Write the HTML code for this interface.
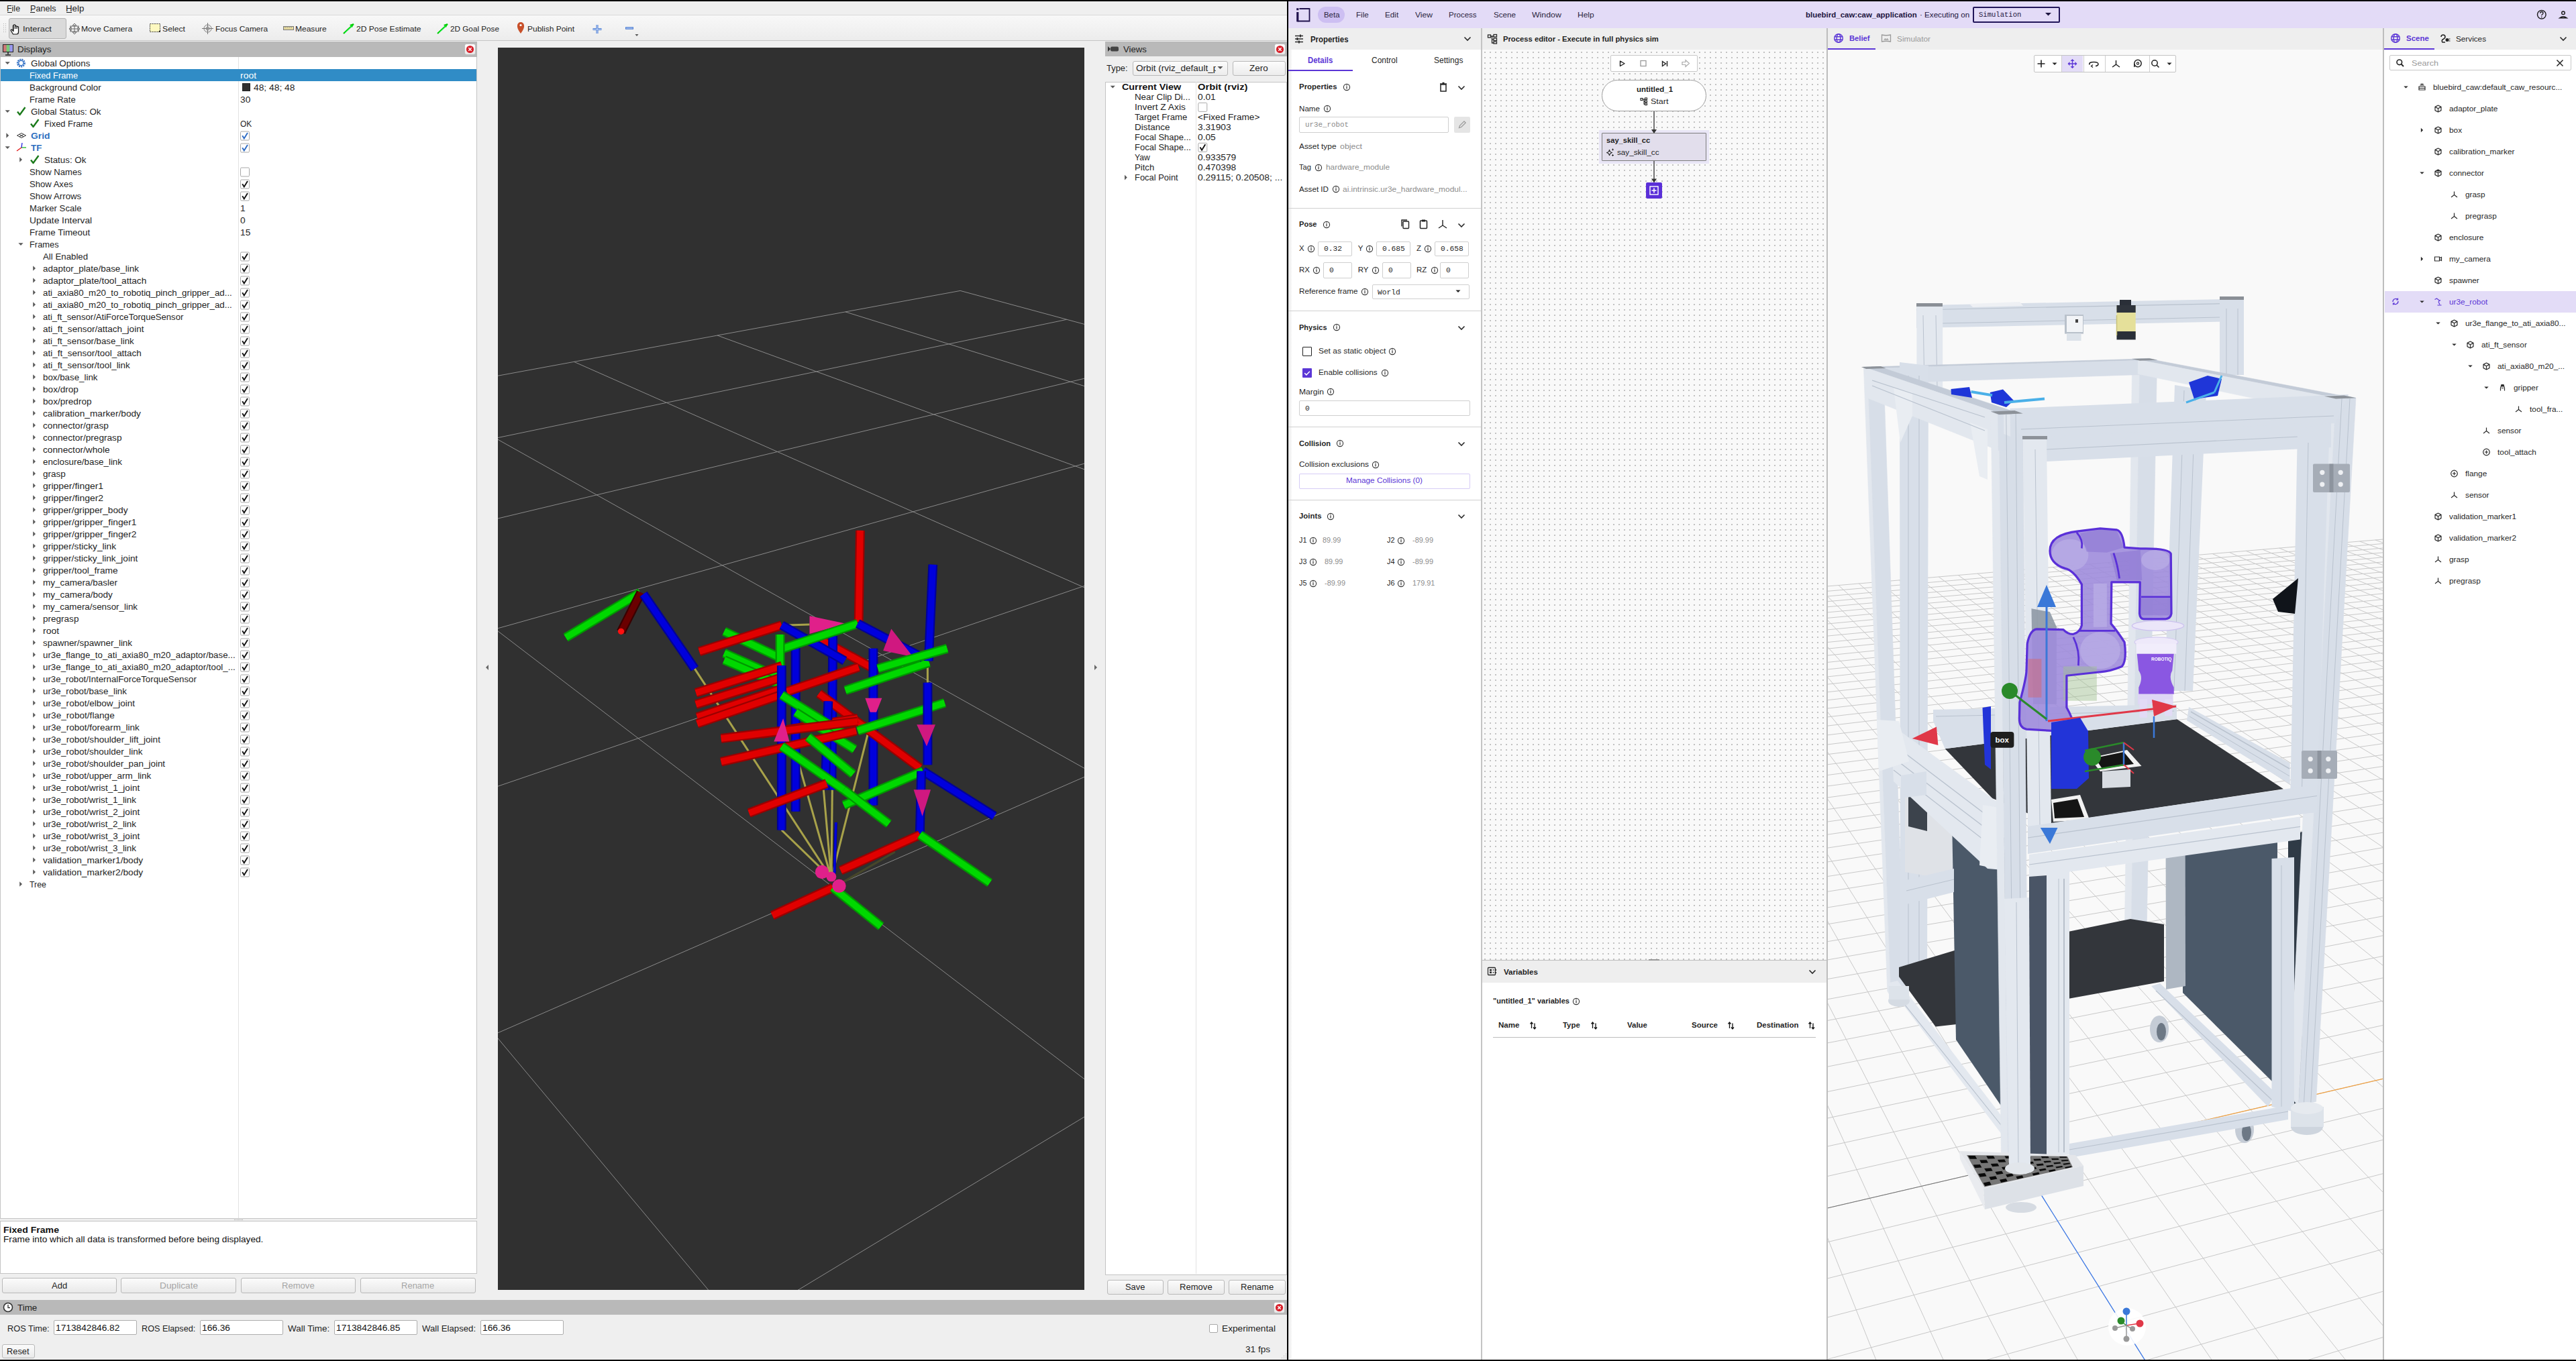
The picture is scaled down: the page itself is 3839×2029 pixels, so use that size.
<!DOCTYPE html><html><head><meta charset="utf-8"><style>
*{margin:0;padding:0;box-sizing:border-box}
html,body{width:3839px;height:2029px;overflow:hidden;background:#000}
body{position:relative;font-family:"Liberation Sans",sans-serif;color:#000}
.a{position:absolute}
.t{position:absolute;white-space:nowrap;line-height:1}
svg{position:absolute;overflow:visible}
</style></head><body><div class="a" style="left:0.0px;top:2.0px;width:1918.0px;height:2025.0px;background:#efefef"></div><div class="t" style="left:10.2px;top:7.3px;font-size:12.48px;color:#1e1e1e;font-weight:normal;transform:scaleX(0.9986);transform-origin:0 0;">File</div><div class="t" style="left:44.7px;top:7.3px;font-size:12.48px;color:#1e1e1e;font-weight:normal;transform:scaleX(1.0122);transform-origin:0 0;">Panels</div><div class="t" style="left:98.2px;top:7.3px;font-size:12.48px;color:#1e1e1e;font-weight:normal;transform:scaleX(1.0660);transform-origin:0 0;">Help</div><div class="a" style="left:10.5px;top:18.0px;width:7.0px;height:1.0px;background:#1e1e1e"></div><div class="a" style="left:44.5px;top:18.0px;width:7.0px;height:1.0px;background:#1e1e1e"></div><div class="a" style="left:98.5px;top:18.0px;width:8.0px;height:1.0px;background:#1e1e1e"></div><div class="a" style="left:0.0px;top:22.0px;width:1918.0px;height:1.0px;background:#d9d9d9"></div><div class="a" style="left:0.0px;top:23.0px;width:1918.0px;height:37.0px;background:linear-gradient(#f8f8f8,#ececec)"></div><div class="a" style="left:0.0px;top:60.0px;width:1918.0px;height:1.0px;background:#c6c6c6"></div><div class="a" style="left:5.0px;top:35.0px;width:1.0px;height:1.0px;background:#b0b0b0"></div><div class="a" style="left:8.0px;top:35.0px;width:1.0px;height:1.0px;background:#b0b0b0"></div><div class="a" style="left:5.0px;top:38.0px;width:1.0px;height:1.0px;background:#b0b0b0"></div><div class="a" style="left:8.0px;top:38.0px;width:1.0px;height:1.0px;background:#b0b0b0"></div><div class="a" style="left:5.0px;top:41.0px;width:1.0px;height:1.0px;background:#b0b0b0"></div><div class="a" style="left:8.0px;top:41.0px;width:1.0px;height:1.0px;background:#b0b0b0"></div><div class="a" style="left:5.0px;top:44.0px;width:1.0px;height:1.0px;background:#b0b0b0"></div><div class="a" style="left:8.0px;top:44.0px;width:1.0px;height:1.0px;background:#b0b0b0"></div><div class="a" style="left:5.0px;top:47.0px;width:1.0px;height:1.0px;background:#b0b0b0"></div><div class="a" style="left:8.0px;top:47.0px;width:1.0px;height:1.0px;background:#b0b0b0"></div><div class="a" style="left:13.0px;top:27.0px;width:86.0px;height:31.0px;background:#dadada;border:1px solid #b2b2b2;border-radius:3px"></div><div class="t" style="left:34.1px;top:38.3px;font-size:11.44px;color:#1e1e1e;font-weight:normal;transform:scaleX(1.1251);transform-origin:0 0;">Interact</div><div class="t" style="left:121.1px;top:38.3px;font-size:11.44px;color:#1e1e1e;font-weight:normal;transform:scaleX(1.0603);transform-origin:0 0;">Move Camera</div><div class="t" style="left:241.5px;top:38.3px;font-size:11.44px;color:#1e1e1e;font-weight:normal;transform:scaleX(1.0674);transform-origin:0 0;">Select</div><div class="t" style="left:320.5px;top:38.3px;font-size:11.44px;color:#1e1e1e;font-weight:normal;transform:scaleX(1.0409);transform-origin:0 0;">Focus Camera</div><div class="t" style="left:440.0px;top:38.3px;font-size:11.44px;color:#1e1e1e;font-weight:normal;transform:scaleX(1.0504);transform-origin:0 0;">Measure</div><div class="t" style="left:530.5px;top:38.3px;font-size:11.44px;color:#1e1e1e;font-weight:normal;transform:scaleX(1.0542);transform-origin:0 0;">2D Pose Estimate</div><div class="t" style="left:670.5px;top:38.3px;font-size:11.44px;color:#1e1e1e;font-weight:normal;transform:scaleX(1.0248);transform-origin:0 0;">2D Goal Pose</div><div class="t" style="left:786.4px;top:38.3px;font-size:11.44px;color:#1e1e1e;font-weight:normal;transform:scaleX(1.0486);transform-origin:0 0;">Publish Point</div><svg style="left:0px;top:0px;" width="1000" height="62" viewBox="0 0 1000 62"><path d="M20 37 v10 M20 39 q0-3 2.5-2 v6 M22.5 40 q0-2 2.5-1 v4 M25 41 q0-2 2.5-1 v4 l0 4 q0 3 -3 3 h-5 l-3 -5 q-1-2 1-2 l2 2 v-8" fill="#fff" stroke="#111" stroke-width="1.2"/><g stroke="#666" fill="none" stroke-width="1"><path d="M111 35 l-3 3 h6 z M111 51 l-3-3 h6 z M103 43 l3-3 v6 z M119 43 l-3-3 v6 z"/><path d="M111 38 v10 M106 43 h10"/><rect x="105" y="39" width="12" height="8"/></g><rect x="223.5" y="35.5" width="15" height="12" fill="#fdf8c0" stroke="#222" stroke-dasharray="1.5,1.2"/><path d="M236 47.5 l3-3 v3z" fill="#111"/><g stroke="#777" fill="none"><circle cx="309.5" cy="42.5" r="5.5"/><circle cx="309.5" cy="42.5" r="2.5"/><path d="M309.5 34 v17 M301 42.5 h17"/></g><rect x="422.5" y="39.5" width="15" height="5" fill="#e8dca0" stroke="#777"/><path d="M425 40v2 M428 40v2 M431 40v2 M434 40v2" stroke="#777" stroke-width=".7"/><path d="M512 50 L527 36" stroke="#0c0" stroke-width="2.2"/><path d="M527 35 l-6 2 l4 4z" fill="#0c0"/><path d="M514 49 L525 38" stroke="#00ff44" stroke-width="1"/><path d="M652 50 L667 36" stroke="#0c0" stroke-width="2.2"/><path d="M667 35 l-6 2 l4 4z" fill="#0c0"/><path d="M654 49 L665 38" stroke="#00ff44" stroke-width="1"/><path d="M776 50 q-6-8 -5-12 a5 5 0 0 1 10 0 q1 4 -5 12z" fill="#c8502a"/><circle cx="776" cy="37.5" r="1.6" fill="#fff"/><path d="M890 37 v13 M883.5 43.5 h13" stroke="#4a7bd0" stroke-width="3"/><path d="M890 37 v13 M883.5 43.5 h13" stroke="#cfe0ff" stroke-width="1"/><path d="M932 42 h12" stroke="#4a7bd0" stroke-width="3.5"/><path d="M933 42 h10" stroke="#cfe0ff" stroke-width="1"/><path d="M946.5 51 h5 l-2.5 3z" fill="#555"/></svg><div class="a" style="left:0.0px;top:62.0px;width:711.0px;height:23.0px;background:#b9b9b9"></div><div class="t" style="left:26.0px;top:67.9px;font-size:12.48px;color:#1e1e1e;font-weight:normal;transform:scaleX(1.0705);transform-origin:0 0;">Displays</div><svg style="left:0px;top:62px;" width="24" height="24" viewBox="0 0 24 24"><rect x="4.5" y="4.5" width="15" height="11" fill="#888" stroke="#222"/><rect x="5" y="5" width="4.7" height="10" fill="#c77"/><rect x="9.7" y="5" width="4.7" height="10" fill="#7c7"/><rect x="14.4" y="5" width="4.6" height="10" fill="#99e"/><path d="M12 16 v3 M8 20 h8" stroke="#222" stroke-width="1.5"/></svg><div class="a" style="left:692.0px;top:65.0px;width:17.0px;height:17.0px;background:linear-gradient(#fff,#e6e6e6);border:1px solid #bdbdbd;border-radius:3px"></div><svg style="left:692px;top:65px;" width="17" height="17" viewBox="0 0 17 17"><circle cx="8.5" cy="8.5" r="5.6" fill="#d8202a"/><path d="M6.3 6.3 l4.4 4.4 M10.7 6.3 l-4.4 4.4" stroke="#fff" stroke-width="1.4"/></svg><div class="a" style="left:0.0px;top:85.0px;width:711.0px;height:1732.0px;background:#fff;border:1px solid #c4c4c4;border-top:none"></div><div class="a" style="left:355.0px;top:85.0px;width:1.0px;height:1731.0px;background:#e2e2e2"></div><div class="a" style="left:1.0px;top:103.0px;width:709.0px;height:18.0px;background:#308cc6"></div><div class="t" style="left:46.2px;top:88.7px;font-size:12.48px;color:#1e1e1e;font-weight:normal;transform:scaleX(1.0708);transform-origin:0 0;">Global Options</div><div class="t" style="left:44.2px;top:106.7px;font-size:12.48px;color:#fff;font-weight:normal;transform:scaleX(1.0323);transform-origin:0 0;">Fixed Frame</div><div class="t" style="left:358.0px;top:106.7px;font-size:12.48px;color:#fff;font-weight:normal;transform:scaleX(1.1188);transform-origin:0 0;">root</div><div class="t" style="left:44.2px;top:124.7px;font-size:12.48px;color:#1e1e1e;font-weight:normal;transform:scaleX(1.0686);transform-origin:0 0;">Background Color</div><div class="t" style="left:378.0px;top:124.7px;font-size:12.48px;color:#1e1e1e;font-weight:normal;transform:scaleX(1.1083);transform-origin:0 0;">48; 48; 48</div><div class="t" style="left:44.2px;top:142.7px;font-size:12.48px;color:#1e1e1e;font-weight:normal;transform:scaleX(1.0430);transform-origin:0 0;">Frame Rate</div><div class="t" style="left:358.0px;top:142.7px;font-size:12.48px;color:#1e1e1e;font-weight:normal;transform:scaleX(1.1001);transform-origin:0 0;">30</div><div class="t" style="left:46.2px;top:160.7px;font-size:12.48px;color:#1e1e1e;font-weight:normal;transform:scaleX(1.0693);transform-origin:0 0;">Global Status: Ok</div><div class="t" style="left:66.0px;top:178.7px;font-size:12.48px;color:#1e1e1e;font-weight:normal;transform:scaleX(1.0323);transform-origin:0 0;">Fixed Frame</div><div class="t" style="left:358.0px;top:178.7px;font-size:12.48px;color:#1e1e1e;font-weight:normal;transform:scaleX(0.9603);transform-origin:0 0;">OK</div><div class="t" style="left:46.2px;top:196.7px;font-size:12.48px;color:#2d6fc0;font-weight:bold;transform:scaleX(1.1098);transform-origin:0 0;">Grid</div><div class="t" style="left:46.2px;top:214.7px;font-size:12.48px;color:#2d6fc0;font-weight:bold;transform:scaleX(1.0747);transform-origin:0 0;">TF</div><div class="t" style="left:66.0px;top:232.7px;font-size:12.48px;color:#1e1e1e;font-weight:normal;transform:scaleX(1.0726);transform-origin:0 0;">Status: Ok</div><div class="t" style="left:44.2px;top:250.7px;font-size:12.48px;color:#1e1e1e;font-weight:normal;transform:scaleX(1.0490);transform-origin:0 0;">Show Names</div><div class="t" style="left:44.2px;top:268.7px;font-size:12.48px;color:#1e1e1e;font-weight:normal;transform:scaleX(1.0491);transform-origin:0 0;">Show Axes</div><div class="t" style="left:44.2px;top:286.7px;font-size:12.48px;color:#1e1e1e;font-weight:normal;transform:scaleX(1.0601);transform-origin:0 0;">Show Arrows</div><div class="t" style="left:44.2px;top:304.7px;font-size:12.48px;color:#1e1e1e;font-weight:normal;transform:scaleX(1.0554);transform-origin:0 0;">Marker Scale</div><div class="t" style="left:358.0px;top:304.7px;font-size:12.48px;color:#1e1e1e;font-weight:normal;transform:scaleX(1.1001);transform-origin:0 0;">1</div><div class="t" style="left:44.2px;top:322.7px;font-size:12.48px;color:#1e1e1e;font-weight:normal;transform:scaleX(1.1016);transform-origin:0 0;">Update Interval</div><div class="t" style="left:358.0px;top:322.7px;font-size:12.48px;color:#1e1e1e;font-weight:normal;transform:scaleX(1.1001);transform-origin:0 0;">0</div><div class="t" style="left:44.2px;top:340.7px;font-size:12.48px;color:#1e1e1e;font-weight:normal;transform:scaleX(1.0752);transform-origin:0 0;">Frame Timeout</div><div class="t" style="left:358.0px;top:340.7px;font-size:12.48px;color:#1e1e1e;font-weight:normal;transform:scaleX(1.1001);transform-origin:0 0;">15</div><div class="t" style="left:44.2px;top:358.7px;font-size:12.48px;color:#1e1e1e;font-weight:normal;transform:scaleX(1.0318);transform-origin:0 0;">Frames</div><div class="t" style="left:64.0px;top:376.7px;font-size:12.48px;color:#1e1e1e;font-weight:normal;transform:scaleX(1.0641);transform-origin:0 0;">All Enabled</div><div class="t" style="left:64.0px;top:394.7px;font-size:12.48px;color:#1e1e1e;font-weight:normal;transform:scaleX(1.0805);transform-origin:0 0;">adaptor_plate/base_link</div><div class="t" style="left:64.0px;top:412.7px;font-size:12.48px;color:#1e1e1e;font-weight:normal;transform:scaleX(1.0963);transform-origin:0 0;">adaptor_plate/tool_attach</div><div class="t" style="left:64.0px;top:430.7px;font-size:12.48px;color:#1e1e1e;font-weight:normal;transform:scaleX(1.0670);transform-origin:0 0;">ati_axia80_m20_to_robotiq_pinch_gripper_ad...</div><div class="t" style="left:64.0px;top:448.7px;font-size:12.48px;color:#1e1e1e;font-weight:normal;transform:scaleX(1.0670);transform-origin:0 0;">ati_axia80_m20_to_robotiq_pinch_gripper_ad...</div><div class="t" style="left:64.0px;top:466.7px;font-size:12.48px;color:#1e1e1e;font-weight:normal;transform:scaleX(1.0525);transform-origin:0 0;">ati_ft_sensor/AtiForceTorqueSensor</div><div class="t" style="left:64.0px;top:484.7px;font-size:12.48px;color:#1e1e1e;font-weight:normal;transform:scaleX(1.0852);transform-origin:0 0;">ati_ft_sensor/attach_joint</div><div class="t" style="left:64.0px;top:502.7px;font-size:12.48px;color:#1e1e1e;font-weight:normal;transform:scaleX(1.0635);transform-origin:0 0;">ati_ft_sensor/base_link</div><div class="t" style="left:64.0px;top:520.7px;font-size:12.48px;color:#1e1e1e;font-weight:normal;transform:scaleX(1.0808);transform-origin:0 0;">ati_ft_sensor/tool_attach</div><div class="t" style="left:64.0px;top:538.7px;font-size:12.48px;color:#1e1e1e;font-weight:normal;transform:scaleX(1.0759);transform-origin:0 0;">ati_ft_sensor/tool_link</div><div class="t" style="left:64.0px;top:556.7px;font-size:12.48px;color:#1e1e1e;font-weight:normal;transform:scaleX(1.0688);transform-origin:0 0;">box/base_link</div><div class="t" style="left:64.0px;top:574.7px;font-size:12.48px;color:#1e1e1e;font-weight:normal;transform:scaleX(1.0910);transform-origin:0 0;">box/drop</div><div class="t" style="left:64.0px;top:592.7px;font-size:12.48px;color:#1e1e1e;font-weight:normal;transform:scaleX(1.0909);transform-origin:0 0;">box/predrop</div><div class="t" style="left:64.0px;top:610.7px;font-size:12.48px;color:#1e1e1e;font-weight:normal;transform:scaleX(1.0967);transform-origin:0 0;">calibration_marker/body</div><div class="t" style="left:64.0px;top:628.7px;font-size:12.48px;color:#1e1e1e;font-weight:normal;transform:scaleX(1.0944);transform-origin:0 0;">connector/grasp</div><div class="t" style="left:64.0px;top:646.7px;font-size:12.48px;color:#1e1e1e;font-weight:normal;transform:scaleX(1.0937);transform-origin:0 0;">connector/pregrasp</div><div class="t" style="left:64.0px;top:664.7px;font-size:12.48px;color:#1e1e1e;font-weight:normal;transform:scaleX(1.0964);transform-origin:0 0;">connector/whole</div><div class="t" style="left:64.0px;top:682.7px;font-size:12.48px;color:#1e1e1e;font-weight:normal;transform:scaleX(1.0702);transform-origin:0 0;">enclosure/base_link</div><div class="t" style="left:64.0px;top:700.7px;font-size:12.48px;color:#1e1e1e;font-weight:normal;transform:scaleX(1.0820);transform-origin:0 0;">grasp</div><div class="t" style="left:64.0px;top:718.7px;font-size:12.48px;color:#1e1e1e;font-weight:normal;transform:scaleX(1.1211);transform-origin:0 0;">gripper/finger1</div><div class="t" style="left:64.0px;top:736.7px;font-size:12.48px;color:#1e1e1e;font-weight:normal;transform:scaleX(1.1211);transform-origin:0 0;">gripper/finger2</div><div class="t" style="left:64.0px;top:754.7px;font-size:12.48px;color:#1e1e1e;font-weight:normal;transform:scaleX(1.0994);transform-origin:0 0;">gripper/gripper_body</div><div class="t" style="left:64.0px;top:772.7px;font-size:12.48px;color:#1e1e1e;font-weight:normal;transform:scaleX(1.1061);transform-origin:0 0;">gripper/gripper_finger1</div><div class="t" style="left:64.0px;top:790.7px;font-size:12.48px;color:#1e1e1e;font-weight:normal;transform:scaleX(1.1061);transform-origin:0 0;">gripper/gripper_finger2</div><div class="t" style="left:64.0px;top:808.7px;font-size:12.48px;color:#1e1e1e;font-weight:normal;transform:scaleX(1.1012);transform-origin:0 0;">gripper/sticky_link</div><div class="t" style="left:64.0px;top:826.7px;font-size:12.48px;color:#1e1e1e;font-weight:normal;transform:scaleX(1.0971);transform-origin:0 0;">gripper/sticky_link_joint</div><div class="t" style="left:64.0px;top:844.7px;font-size:12.48px;color:#1e1e1e;font-weight:normal;transform:scaleX(1.1039);transform-origin:0 0;">gripper/tool_frame</div><div class="t" style="left:64.0px;top:862.7px;font-size:12.48px;color:#1e1e1e;font-weight:normal;transform:scaleX(1.0816);transform-origin:0 0;">my_camera/basler</div><div class="t" style="left:64.0px;top:880.7px;font-size:12.48px;color:#1e1e1e;font-weight:normal;transform:scaleX(1.0848);transform-origin:0 0;">my_camera/body</div><div class="t" style="left:64.0px;top:898.7px;font-size:12.48px;color:#1e1e1e;font-weight:normal;transform:scaleX(1.0710);transform-origin:0 0;">my_camera/sensor_link</div><div class="t" style="left:64.0px;top:916.7px;font-size:12.48px;color:#1e1e1e;font-weight:normal;transform:scaleX(1.0852);transform-origin:0 0;">pregrasp</div><div class="t" style="left:64.0px;top:934.7px;font-size:12.48px;color:#1e1e1e;font-weight:normal;transform:scaleX(1.1188);transform-origin:0 0;">root</div><div class="t" style="left:64.0px;top:952.7px;font-size:12.48px;color:#1e1e1e;font-weight:normal;transform:scaleX(1.0787);transform-origin:0 0;">spawner/spawner_link</div><div class="t" style="left:64.0px;top:970.7px;font-size:12.48px;color:#1e1e1e;font-weight:normal;transform:scaleX(1.0685);transform-origin:0 0;">ur3e_flange_to_ati_axia80_m20_adaptor/base...</div><div class="t" style="left:64.0px;top:988.7px;font-size:12.48px;color:#1e1e1e;font-weight:normal;transform:scaleX(1.0690);transform-origin:0 0;">ur3e_flange_to_ati_axia80_m20_adaptor/tool_...</div><div class="t" style="left:64.0px;top:1006.7px;font-size:12.48px;color:#1e1e1e;font-weight:normal;transform:scaleX(1.0653);transform-origin:0 0;">ur3e_robot/InternalForceTorqueSensor</div><div class="t" style="left:64.0px;top:1024.7px;font-size:12.48px;color:#1e1e1e;font-weight:normal;transform:scaleX(1.0734);transform-origin:0 0;">ur3e_robot/base_link</div><div class="t" style="left:64.0px;top:1042.7px;font-size:12.48px;color:#1e1e1e;font-weight:normal;transform:scaleX(1.0857);transform-origin:0 0;">ur3e_robot/elbow_joint</div><div class="t" style="left:64.0px;top:1060.7px;font-size:12.48px;color:#1e1e1e;font-weight:normal;transform:scaleX(1.0917);transform-origin:0 0;">ur3e_robot/flange</div><div class="t" style="left:64.0px;top:1078.7px;font-size:12.48px;color:#1e1e1e;font-weight:normal;transform:scaleX(1.0860);transform-origin:0 0;">ur3e_robot/forearm_link</div><div class="t" style="left:64.0px;top:1096.7px;font-size:12.48px;color:#1e1e1e;font-weight:normal;transform:scaleX(1.0876);transform-origin:0 0;">ur3e_robot/shoulder_lift_joint</div><div class="t" style="left:64.0px;top:1114.7px;font-size:12.48px;color:#1e1e1e;font-weight:normal;transform:scaleX(1.0816);transform-origin:0 0;">ur3e_robot/shoulder_link</div><div class="t" style="left:64.0px;top:1132.7px;font-size:12.48px;color:#1e1e1e;font-weight:normal;transform:scaleX(1.0765);transform-origin:0 0;">ur3e_robot/shoulder_pan_joint</div><div class="t" style="left:64.0px;top:1150.7px;font-size:12.48px;color:#1e1e1e;font-weight:normal;transform:scaleX(1.0773);transform-origin:0 0;">ur3e_robot/upper_arm_link</div><div class="t" style="left:64.0px;top:1168.7px;font-size:12.48px;color:#1e1e1e;font-weight:normal;transform:scaleX(1.0832);transform-origin:0 0;">ur3e_robot/wrist_1_joint</div><div class="t" style="left:64.0px;top:1186.7px;font-size:12.48px;color:#1e1e1e;font-weight:normal;transform:scaleX(1.0787);transform-origin:0 0;">ur3e_robot/wrist_1_link</div><div class="t" style="left:64.0px;top:1204.7px;font-size:12.48px;color:#1e1e1e;font-weight:normal;transform:scaleX(1.0832);transform-origin:0 0;">ur3e_robot/wrist_2_joint</div><div class="t" style="left:64.0px;top:1222.7px;font-size:12.48px;color:#1e1e1e;font-weight:normal;transform:scaleX(1.0787);transform-origin:0 0;">ur3e_robot/wrist_2_link</div><div class="t" style="left:64.0px;top:1240.7px;font-size:12.48px;color:#1e1e1e;font-weight:normal;transform:scaleX(1.0832);transform-origin:0 0;">ur3e_robot/wrist_3_joint</div><div class="t" style="left:64.0px;top:1258.7px;font-size:12.48px;color:#1e1e1e;font-weight:normal;transform:scaleX(1.0787);transform-origin:0 0;">ur3e_robot/wrist_3_link</div><div class="t" style="left:64.0px;top:1276.7px;font-size:12.48px;color:#1e1e1e;font-weight:normal;transform:scaleX(1.0978);transform-origin:0 0;">validation_marker1/body</div><div class="t" style="left:64.0px;top:1294.7px;font-size:12.48px;color:#1e1e1e;font-weight:normal;transform:scaleX(1.0978);transform-origin:0 0;">validation_marker2/body</div><div class="t" style="left:44.2px;top:1312.7px;font-size:12.48px;color:#1e1e1e;font-weight:normal;transform:scaleX(0.9923);transform-origin:0 0;">Tree</div><svg style="left:0px;top:0px;" width="720" height="1400" viewBox="0 0 720 1400"><path d="M7.6 92.2 h7.2 l-3.6 3.8z" fill="#5a5a5a"/><g transform="translate(31.4 94)"><circle r="5.2" fill="none" stroke="#3d78c8" stroke-width="2.6" stroke-dasharray="2 1.1"/><circle r="3.6" fill="none" stroke="#3d78c8" stroke-width="1.4"/></g><rect x="361.5" y="124.5" width="11" height="11" fill="#303030" stroke="#222"/><path d="M7.6 164.2 h7.2 l-3.6 3.8z" fill="#5a5a5a"/><path d="M26 166.5 l3.5 4.5 l8-11" stroke="#1b7a1b" stroke-width="2.4" fill="none" stroke-linejoin="round"/><path d="M46 184.5 l3.5 4.5 l8-11" stroke="#1b7a1b" stroke-width="2.4" fill="none" stroke-linejoin="round"/><path d="M9.399999999999999 198.2 v7.6 l3.8-3.8z" fill="#5a5a5a"/><g stroke="#333" fill="none" stroke-width="1"><path d="M25.5 202 l6.5-3.5 l6.5 3.5 l-6.5 3.5z M28.5 200.3 l6.5 3.5 M35.5 200.3 l-6.5 3.5"/></g><rect x="358.5" y="196" width="13" height="13" fill="#fff" stroke="#a8a8a8" rx="1.5"/><path d="M361.2 202.3 l2.6 4.2 l5.2-8.6" stroke="#2c6ac4" stroke-width="1.9" fill="none"/><path d="M7.6 218.2 h7.2 l-3.6 3.8z" fill="#5a5a5a"/><g stroke-width="1.2"><path d="M32 220 l-7 5" stroke="#e01010"/><path d="M32 220 l7 0" stroke="#10b010"/><path d="M32 220 l1-7" stroke="#1010e0"/></g><rect x="358.5" y="214" width="13" height="13" fill="#fff" stroke="#a8a8a8" rx="1.5"/><path d="M361.2 220.3 l2.6 4.2 l5.2-8.6" stroke="#2c6ac4" stroke-width="1.9" fill="none"/><path d="M29.2 234.2 v7.6 l3.8-3.8z" fill="#5a5a5a"/><path d="M46 238.5 l3.5 4.5 l8-11" stroke="#1b7a1b" stroke-width="2.4" fill="none" stroke-linejoin="round"/><rect x="358.5" y="250" width="13" height="13" fill="#fff" stroke="#a8a8a8" rx="1.5"/><rect x="358.5" y="268" width="13" height="13" fill="#fff" stroke="#a8a8a8" rx="1.5"/><path d="M361.2 274.3 l2.6 4.2 l5.2-8.6" stroke="#111" stroke-width="1.9" fill="none"/><rect x="358.5" y="286" width="13" height="13" fill="#fff" stroke="#a8a8a8" rx="1.5"/><path d="M361.2 292.3 l2.6 4.2 l5.2-8.6" stroke="#111" stroke-width="1.9" fill="none"/><path d="M27.4 362.2 h7.2 l-3.6 3.8z" fill="#5a5a5a"/><rect x="358.5" y="376" width="13" height="13" fill="#fff" stroke="#a8a8a8" rx="1.5"/><path d="M361.2 382.3 l2.6 4.2 l5.2-8.6" stroke="#111" stroke-width="1.9" fill="none"/><path d="M49.2 396.2 v7.6 l3.8-3.8z" fill="#5a5a5a"/><rect x="358.5" y="394" width="13" height="13" fill="#fff" stroke="#a8a8a8" rx="1.5"/><path d="M361.2 400.3 l2.6 4.2 l5.2-8.6" stroke="#111" stroke-width="1.9" fill="none"/><path d="M49.2 414.2 v7.6 l3.8-3.8z" fill="#5a5a5a"/><rect x="358.5" y="412" width="13" height="13" fill="#fff" stroke="#a8a8a8" rx="1.5"/><path d="M361.2 418.3 l2.6 4.2 l5.2-8.6" stroke="#111" stroke-width="1.9" fill="none"/><path d="M49.2 432.2 v7.6 l3.8-3.8z" fill="#5a5a5a"/><rect x="358.5" y="430" width="13" height="13" fill="#fff" stroke="#a8a8a8" rx="1.5"/><path d="M361.2 436.3 l2.6 4.2 l5.2-8.6" stroke="#111" stroke-width="1.9" fill="none"/><path d="M49.2 450.2 v7.6 l3.8-3.8z" fill="#5a5a5a"/><rect x="358.5" y="448" width="13" height="13" fill="#fff" stroke="#a8a8a8" rx="1.5"/><path d="M361.2 454.3 l2.6 4.2 l5.2-8.6" stroke="#111" stroke-width="1.9" fill="none"/><path d="M49.2 468.2 v7.6 l3.8-3.8z" fill="#5a5a5a"/><rect x="358.5" y="466" width="13" height="13" fill="#fff" stroke="#a8a8a8" rx="1.5"/><path d="M361.2 472.3 l2.6 4.2 l5.2-8.6" stroke="#111" stroke-width="1.9" fill="none"/><path d="M49.2 486.2 v7.6 l3.8-3.8z" fill="#5a5a5a"/><rect x="358.5" y="484" width="13" height="13" fill="#fff" stroke="#a8a8a8" rx="1.5"/><path d="M361.2 490.3 l2.6 4.2 l5.2-8.6" stroke="#111" stroke-width="1.9" fill="none"/><path d="M49.2 504.2 v7.6 l3.8-3.8z" fill="#5a5a5a"/><rect x="358.5" y="502" width="13" height="13" fill="#fff" stroke="#a8a8a8" rx="1.5"/><path d="M361.2 508.3 l2.6 4.2 l5.2-8.6" stroke="#111" stroke-width="1.9" fill="none"/><path d="M49.2 522.2 v7.6 l3.8-3.8z" fill="#5a5a5a"/><rect x="358.5" y="520" width="13" height="13" fill="#fff" stroke="#a8a8a8" rx="1.5"/><path d="M361.2 526.3 l2.6 4.2 l5.2-8.6" stroke="#111" stroke-width="1.9" fill="none"/><path d="M49.2 540.2 v7.6 l3.8-3.8z" fill="#5a5a5a"/><rect x="358.5" y="538" width="13" height="13" fill="#fff" stroke="#a8a8a8" rx="1.5"/><path d="M361.2 544.3 l2.6 4.2 l5.2-8.6" stroke="#111" stroke-width="1.9" fill="none"/><path d="M49.2 558.2 v7.6 l3.8-3.8z" fill="#5a5a5a"/><rect x="358.5" y="556" width="13" height="13" fill="#fff" stroke="#a8a8a8" rx="1.5"/><path d="M361.2 562.3 l2.6 4.2 l5.2-8.6" stroke="#111" stroke-width="1.9" fill="none"/><path d="M49.2 576.2 v7.6 l3.8-3.8z" fill="#5a5a5a"/><rect x="358.5" y="574" width="13" height="13" fill="#fff" stroke="#a8a8a8" rx="1.5"/><path d="M361.2 580.3 l2.6 4.2 l5.2-8.6" stroke="#111" stroke-width="1.9" fill="none"/><path d="M49.2 594.2 v7.6 l3.8-3.8z" fill="#5a5a5a"/><rect x="358.5" y="592" width="13" height="13" fill="#fff" stroke="#a8a8a8" rx="1.5"/><path d="M361.2 598.3 l2.6 4.2 l5.2-8.6" stroke="#111" stroke-width="1.9" fill="none"/><path d="M49.2 612.2 v7.6 l3.8-3.8z" fill="#5a5a5a"/><rect x="358.5" y="610" width="13" height="13" fill="#fff" stroke="#a8a8a8" rx="1.5"/><path d="M361.2 616.3 l2.6 4.2 l5.2-8.6" stroke="#111" stroke-width="1.9" fill="none"/><path d="M49.2 630.2 v7.6 l3.8-3.8z" fill="#5a5a5a"/><rect x="358.5" y="628" width="13" height="13" fill="#fff" stroke="#a8a8a8" rx="1.5"/><path d="M361.2 634.3 l2.6 4.2 l5.2-8.6" stroke="#111" stroke-width="1.9" fill="none"/><path d="M49.2 648.2 v7.6 l3.8-3.8z" fill="#5a5a5a"/><rect x="358.5" y="646" width="13" height="13" fill="#fff" stroke="#a8a8a8" rx="1.5"/><path d="M361.2 652.3 l2.6 4.2 l5.2-8.6" stroke="#111" stroke-width="1.9" fill="none"/><path d="M49.2 666.2 v7.6 l3.8-3.8z" fill="#5a5a5a"/><rect x="358.5" y="664" width="13" height="13" fill="#fff" stroke="#a8a8a8" rx="1.5"/><path d="M361.2 670.3 l2.6 4.2 l5.2-8.6" stroke="#111" stroke-width="1.9" fill="none"/><path d="M49.2 684.2 v7.6 l3.8-3.8z" fill="#5a5a5a"/><rect x="358.5" y="682" width="13" height="13" fill="#fff" stroke="#a8a8a8" rx="1.5"/><path d="M361.2 688.3 l2.6 4.2 l5.2-8.6" stroke="#111" stroke-width="1.9" fill="none"/><path d="M49.2 702.2 v7.6 l3.8-3.8z" fill="#5a5a5a"/><rect x="358.5" y="700" width="13" height="13" fill="#fff" stroke="#a8a8a8" rx="1.5"/><path d="M361.2 706.3 l2.6 4.2 l5.2-8.6" stroke="#111" stroke-width="1.9" fill="none"/><path d="M49.2 720.2 v7.6 l3.8-3.8z" fill="#5a5a5a"/><rect x="358.5" y="718" width="13" height="13" fill="#fff" stroke="#a8a8a8" rx="1.5"/><path d="M361.2 724.3 l2.6 4.2 l5.2-8.6" stroke="#111" stroke-width="1.9" fill="none"/><path d="M49.2 738.2 v7.6 l3.8-3.8z" fill="#5a5a5a"/><rect x="358.5" y="736" width="13" height="13" fill="#fff" stroke="#a8a8a8" rx="1.5"/><path d="M361.2 742.3 l2.6 4.2 l5.2-8.6" stroke="#111" stroke-width="1.9" fill="none"/><path d="M49.2 756.2 v7.6 l3.8-3.8z" fill="#5a5a5a"/><rect x="358.5" y="754" width="13" height="13" fill="#fff" stroke="#a8a8a8" rx="1.5"/><path d="M361.2 760.3 l2.6 4.2 l5.2-8.6" stroke="#111" stroke-width="1.9" fill="none"/><path d="M49.2 774.2 v7.6 l3.8-3.8z" fill="#5a5a5a"/><rect x="358.5" y="772" width="13" height="13" fill="#fff" stroke="#a8a8a8" rx="1.5"/><path d="M361.2 778.3 l2.6 4.2 l5.2-8.6" stroke="#111" stroke-width="1.9" fill="none"/><path d="M49.2 792.2 v7.6 l3.8-3.8z" fill="#5a5a5a"/><rect x="358.5" y="790" width="13" height="13" fill="#fff" stroke="#a8a8a8" rx="1.5"/><path d="M361.2 796.3 l2.6 4.2 l5.2-8.6" stroke="#111" stroke-width="1.9" fill="none"/><path d="M49.2 810.2 v7.6 l3.8-3.8z" fill="#5a5a5a"/><rect x="358.5" y="808" width="13" height="13" fill="#fff" stroke="#a8a8a8" rx="1.5"/><path d="M361.2 814.3 l2.6 4.2 l5.2-8.6" stroke="#111" stroke-width="1.9" fill="none"/><path d="M49.2 828.2 v7.6 l3.8-3.8z" fill="#5a5a5a"/><rect x="358.5" y="826" width="13" height="13" fill="#fff" stroke="#a8a8a8" rx="1.5"/><path d="M361.2 832.3 l2.6 4.2 l5.2-8.6" stroke="#111" stroke-width="1.9" fill="none"/><path d="M49.2 846.2 v7.6 l3.8-3.8z" fill="#5a5a5a"/><rect x="358.5" y="844" width="13" height="13" fill="#fff" stroke="#a8a8a8" rx="1.5"/><path d="M361.2 850.3 l2.6 4.2 l5.2-8.6" stroke="#111" stroke-width="1.9" fill="none"/><path d="M49.2 864.2 v7.6 l3.8-3.8z" fill="#5a5a5a"/><rect x="358.5" y="862" width="13" height="13" fill="#fff" stroke="#a8a8a8" rx="1.5"/><path d="M361.2 868.3 l2.6 4.2 l5.2-8.6" stroke="#111" stroke-width="1.9" fill="none"/><path d="M49.2 882.2 v7.6 l3.8-3.8z" fill="#5a5a5a"/><rect x="358.5" y="880" width="13" height="13" fill="#fff" stroke="#a8a8a8" rx="1.5"/><path d="M361.2 886.3 l2.6 4.2 l5.2-8.6" stroke="#111" stroke-width="1.9" fill="none"/><path d="M49.2 900.2 v7.6 l3.8-3.8z" fill="#5a5a5a"/><rect x="358.5" y="898" width="13" height="13" fill="#fff" stroke="#a8a8a8" rx="1.5"/><path d="M361.2 904.3 l2.6 4.2 l5.2-8.6" stroke="#111" stroke-width="1.9" fill="none"/><path d="M49.2 918.2 v7.6 l3.8-3.8z" fill="#5a5a5a"/><rect x="358.5" y="916" width="13" height="13" fill="#fff" stroke="#a8a8a8" rx="1.5"/><path d="M361.2 922.3 l2.6 4.2 l5.2-8.6" stroke="#111" stroke-width="1.9" fill="none"/><path d="M49.2 936.2 v7.6 l3.8-3.8z" fill="#5a5a5a"/><rect x="358.5" y="934" width="13" height="13" fill="#fff" stroke="#a8a8a8" rx="1.5"/><path d="M361.2 940.3 l2.6 4.2 l5.2-8.6" stroke="#111" stroke-width="1.9" fill="none"/><path d="M49.2 954.2 v7.6 l3.8-3.8z" fill="#5a5a5a"/><rect x="358.5" y="952" width="13" height="13" fill="#fff" stroke="#a8a8a8" rx="1.5"/><path d="M361.2 958.3 l2.6 4.2 l5.2-8.6" stroke="#111" stroke-width="1.9" fill="none"/><path d="M49.2 972.2 v7.6 l3.8-3.8z" fill="#5a5a5a"/><rect x="358.5" y="970" width="13" height="13" fill="#fff" stroke="#a8a8a8" rx="1.5"/><path d="M361.2 976.3 l2.6 4.2 l5.2-8.6" stroke="#111" stroke-width="1.9" fill="none"/><path d="M49.2 990.2 v7.6 l3.8-3.8z" fill="#5a5a5a"/><rect x="358.5" y="988" width="13" height="13" fill="#fff" stroke="#a8a8a8" rx="1.5"/><path d="M361.2 994.3 l2.6 4.2 l5.2-8.6" stroke="#111" stroke-width="1.9" fill="none"/><path d="M49.2 1008.2 v7.6 l3.8-3.8z" fill="#5a5a5a"/><rect x="358.5" y="1006" width="13" height="13" fill="#fff" stroke="#a8a8a8" rx="1.5"/><path d="M361.2 1012.3 l2.6 4.2 l5.2-8.6" stroke="#111" stroke-width="1.9" fill="none"/><path d="M49.2 1026.2 v7.6 l3.8-3.8z" fill="#5a5a5a"/><rect x="358.5" y="1024" width="13" height="13" fill="#fff" stroke="#a8a8a8" rx="1.5"/><path d="M361.2 1030.3 l2.6 4.2 l5.2-8.6" stroke="#111" stroke-width="1.9" fill="none"/><path d="M49.2 1044.2 v7.6 l3.8-3.8z" fill="#5a5a5a"/><rect x="358.5" y="1042" width="13" height="13" fill="#fff" stroke="#a8a8a8" rx="1.5"/><path d="M361.2 1048.3 l2.6 4.2 l5.2-8.6" stroke="#111" stroke-width="1.9" fill="none"/><path d="M49.2 1062.2 v7.6 l3.8-3.8z" fill="#5a5a5a"/><rect x="358.5" y="1060" width="13" height="13" fill="#fff" stroke="#a8a8a8" rx="1.5"/><path d="M361.2 1066.3 l2.6 4.2 l5.2-8.6" stroke="#111" stroke-width="1.9" fill="none"/><path d="M49.2 1080.2 v7.6 l3.8-3.8z" fill="#5a5a5a"/><rect x="358.5" y="1078" width="13" height="13" fill="#fff" stroke="#a8a8a8" rx="1.5"/><path d="M361.2 1084.3 l2.6 4.2 l5.2-8.6" stroke="#111" stroke-width="1.9" fill="none"/><path d="M49.2 1098.2 v7.6 l3.8-3.8z" fill="#5a5a5a"/><rect x="358.5" y="1096" width="13" height="13" fill="#fff" stroke="#a8a8a8" rx="1.5"/><path d="M361.2 1102.3 l2.6 4.2 l5.2-8.6" stroke="#111" stroke-width="1.9" fill="none"/><path d="M49.2 1116.2 v7.6 l3.8-3.8z" fill="#5a5a5a"/><rect x="358.5" y="1114" width="13" height="13" fill="#fff" stroke="#a8a8a8" rx="1.5"/><path d="M361.2 1120.3 l2.6 4.2 l5.2-8.6" stroke="#111" stroke-width="1.9" fill="none"/><path d="M49.2 1134.2 v7.6 l3.8-3.8z" fill="#5a5a5a"/><rect x="358.5" y="1132" width="13" height="13" fill="#fff" stroke="#a8a8a8" rx="1.5"/><path d="M361.2 1138.3 l2.6 4.2 l5.2-8.6" stroke="#111" stroke-width="1.9" fill="none"/><path d="M49.2 1152.2 v7.6 l3.8-3.8z" fill="#5a5a5a"/><rect x="358.5" y="1150" width="13" height="13" fill="#fff" stroke="#a8a8a8" rx="1.5"/><path d="M361.2 1156.3 l2.6 4.2 l5.2-8.6" stroke="#111" stroke-width="1.9" fill="none"/><path d="M49.2 1170.2 v7.6 l3.8-3.8z" fill="#5a5a5a"/><rect x="358.5" y="1168" width="13" height="13" fill="#fff" stroke="#a8a8a8" rx="1.5"/><path d="M361.2 1174.3 l2.6 4.2 l5.2-8.6" stroke="#111" stroke-width="1.9" fill="none"/><path d="M49.2 1188.2 v7.6 l3.8-3.8z" fill="#5a5a5a"/><rect x="358.5" y="1186" width="13" height="13" fill="#fff" stroke="#a8a8a8" rx="1.5"/><path d="M361.2 1192.3 l2.6 4.2 l5.2-8.6" stroke="#111" stroke-width="1.9" fill="none"/><path d="M49.2 1206.2 v7.6 l3.8-3.8z" fill="#5a5a5a"/><rect x="358.5" y="1204" width="13" height="13" fill="#fff" stroke="#a8a8a8" rx="1.5"/><path d="M361.2 1210.3 l2.6 4.2 l5.2-8.6" stroke="#111" stroke-width="1.9" fill="none"/><path d="M49.2 1224.2 v7.6 l3.8-3.8z" fill="#5a5a5a"/><rect x="358.5" y="1222" width="13" height="13" fill="#fff" stroke="#a8a8a8" rx="1.5"/><path d="M361.2 1228.3 l2.6 4.2 l5.2-8.6" stroke="#111" stroke-width="1.9" fill="none"/><path d="M49.2 1242.2 v7.6 l3.8-3.8z" fill="#5a5a5a"/><rect x="358.5" y="1240" width="13" height="13" fill="#fff" stroke="#a8a8a8" rx="1.5"/><path d="M361.2 1246.3 l2.6 4.2 l5.2-8.6" stroke="#111" stroke-width="1.9" fill="none"/><path d="M49.2 1260.2 v7.6 l3.8-3.8z" fill="#5a5a5a"/><rect x="358.5" y="1258" width="13" height="13" fill="#fff" stroke="#a8a8a8" rx="1.5"/><path d="M361.2 1264.3 l2.6 4.2 l5.2-8.6" stroke="#111" stroke-width="1.9" fill="none"/><path d="M49.2 1278.2 v7.6 l3.8-3.8z" fill="#5a5a5a"/><rect x="358.5" y="1276" width="13" height="13" fill="#fff" stroke="#a8a8a8" rx="1.5"/><path d="M361.2 1282.3 l2.6 4.2 l5.2-8.6" stroke="#111" stroke-width="1.9" fill="none"/><path d="M49.2 1296.2 v7.6 l3.8-3.8z" fill="#5a5a5a"/><rect x="358.5" y="1294" width="13" height="13" fill="#fff" stroke="#a8a8a8" rx="1.5"/><path d="M361.2 1300.3 l2.6 4.2 l5.2-8.6" stroke="#111" stroke-width="1.9" fill="none"/><path d="M29.2 1314.2 v7.6 l3.8-3.8z" fill="#5a5a5a"/></svg><div class="a" style="left:349.0px;top:1818.0px;width:1.0px;height:1.0px;background:#999"></div><div class="a" style="left:351.0px;top:1818.0px;width:1.0px;height:1.0px;background:#999"></div><div class="a" style="left:353.0px;top:1818.0px;width:1.0px;height:1.0px;background:#999"></div><div class="a" style="left:355.0px;top:1818.0px;width:1.0px;height:1.0px;background:#999"></div><div class="a" style="left:357.0px;top:1818.0px;width:1.0px;height:1.0px;background:#999"></div><div class="a" style="left:359.0px;top:1818.0px;width:1.0px;height:1.0px;background:#999"></div><div class="a" style="left:361.0px;top:1818.0px;width:1.0px;height:1.0px;background:#999"></div><div class="a" style="left:0.0px;top:1820.0px;width:711.0px;height:79.0px;background:#fff;border:1px solid #c4c4c4"></div><div class="t" style="left:5.0px;top:1828.2px;font-size:12.48px;color:#111;font-weight:bold;transform:scaleX(1.1296);transform-origin:0 0;">Fixed Frame</div><div class="t" style="left:5.0px;top:1842.3px;font-size:12.48px;color:#111;font-weight:normal;transform:scaleX(1.0960);transform-origin:0 0;">Frame into which all data is transformed before being displayed.</div><div class="a" style="left:2.6px;top:1905.0px;width:171.0px;height:23.0px;background:linear-gradient(#fbfbfb,#e9e9e9);border:1px solid #b9b9b9;border-radius:3px"></div><div class="t" style="left:76.5px;top:1911.2px;font-size:12.48px;color:#1e1e1e;font-weight:normal;transform:scaleX(1.0464);transform-origin:0 0;">Add</div><div class="a" style="left:180.4px;top:1905.0px;width:172.0px;height:23.0px;background:linear-gradient(#fbfbfb,#e9e9e9);border:1px solid #b9b9b9;border-radius:3px"></div><div class="t" style="left:237.8px;top:1911.2px;font-size:12.48px;color:#a5a5a5;font-weight:normal;transform:scaleX(1.0989);transform-origin:0 0;">Duplicate</div><div class="a" style="left:359.3px;top:1905.0px;width:171.0px;height:23.0px;background:linear-gradient(#fbfbfb,#e9e9e9);border:1px solid #b9b9b9;border-radius:3px"></div><div class="t" style="left:420.4px;top:1911.2px;font-size:12.48px;color:#a5a5a5;font-weight:normal;transform:scaleX(1.0480);transform-origin:0 0;">Remove</div><div class="a" style="left:537.0px;top:1905.0px;width:172.0px;height:23.0px;background:linear-gradient(#fbfbfb,#e9e9e9);border:1px solid #b9b9b9;border-radius:3px"></div><div class="t" style="left:598.4px;top:1911.2px;font-size:12.48px;color:#a5a5a5;font-weight:normal;transform:scaleX(1.0434);transform-origin:0 0;">Rename</div><div class="a" style="left:0.0px;top:1938.0px;width:1918.0px;height:22.0px;background:#b9b9b9"></div><svg style="left:0px;top:1938px;" width="24" height="22" viewBox="0 0 24 22"><circle cx="12" cy="11" r="6.5" fill="#fff" stroke="#333" stroke-width="1.6"/><path d="M12 7 v4.5 h3" stroke="#333" stroke-width="1.3" fill="none"/></svg><div class="t" style="left:26.0px;top:1943.7px;font-size:12.48px;color:#1e1e1e;font-weight:normal;transform:scaleX(1.0769);transform-origin:0 0;">Time</div><div class="a" style="left:1898.0px;top:1941.0px;width:17.0px;height:17.0px;background:linear-gradient(#fff,#e6e6e6);border:1px solid #bdbdbd;border-radius:3px"></div><svg style="left:1898px;top:1941px;" width="17" height="17" viewBox="0 0 17 17"><circle cx="8.5" cy="8.5" r="5.6" fill="#d8202a"/><path d="M6.3 6.3 l4.4 4.4 M10.7 6.3 l-4.4 4.4" stroke="#fff" stroke-width="1.4"/></svg><div class="t" style="left:11.2px;top:1974.7px;font-size:12.48px;color:#1e1e1e;font-weight:normal;transform:scaleX(1.0263);transform-origin:0 0;">ROS Time:</div><div class="a" style="left:80.0px;top:1968.0px;width:124.0px;height:22.0px;background:#fff;border:1px solid #aeaeae;border-radius:2px"></div><div class="t" style="left:83.0px;top:1974.2px;font-size:12.48px;color:#111;font-weight:normal;transform:scaleX(1.1001);transform-origin:0 0;">1713842846.82</div><div class="t" style="left:211.3px;top:1974.7px;font-size:12.48px;color:#1e1e1e;font-weight:normal;transform:scaleX(1.0167);transform-origin:0 0;">ROS Elapsed:</div><div class="a" style="left:298.0px;top:1968.0px;width:124.0px;height:22.0px;background:#fff;border:1px solid #aeaeae;border-radius:2px"></div><div class="t" style="left:301.0px;top:1974.2px;font-size:12.48px;color:#111;font-weight:normal;transform:scaleX(1.1001);transform-origin:0 0;">166.36</div><div class="t" style="left:429.4px;top:1974.7px;font-size:12.48px;color:#1e1e1e;font-weight:normal;transform:scaleX(1.0789);transform-origin:0 0;">Wall Time:</div><div class="a" style="left:498.3px;top:1968.0px;width:124.0px;height:22.0px;background:#fff;border:1px solid #aeaeae;border-radius:2px"></div><div class="t" style="left:501.3px;top:1974.2px;font-size:12.48px;color:#111;font-weight:normal;transform:scaleX(1.1001);transform-origin:0 0;">1713842846.85</div><div class="t" style="left:629.0px;top:1974.7px;font-size:12.48px;color:#1e1e1e;font-weight:normal;transform:scaleX(1.0565);transform-origin:0 0;">Wall Elapsed:</div><div class="a" style="left:716.4px;top:1968.0px;width:124.0px;height:22.0px;background:#fff;border:1px solid #aeaeae;border-radius:2px"></div><div class="t" style="left:719.4px;top:1974.2px;font-size:12.48px;color:#111;font-weight:normal;transform:scaleX(1.1001);transform-origin:0 0;">166.36</div><div class="a" style="left:1802.0px;top:1973.5px;width:13.0px;height:13.0px;background:#fff;border:1px solid #a8a8a8;border-radius:2px"></div><div class="t" style="left:1821.0px;top:1974.7px;font-size:12.48px;color:#1e1e1e;font-weight:normal;transform:scaleX(1.0988);transform-origin:0 0;">Experimental</div><div class="a" style="left:2.6px;top:2003.5px;width:49.0px;height:21.0px;background:linear-gradient(#fbfbfb,#e9e9e9);border:1px solid #b9b9b9;border-radius:3px"></div><div class="t" style="left:10.3px;top:2008.7px;font-size:12.48px;color:#1e1e1e;font-weight:normal;transform:scaleX(1.0283);transform-origin:0 0;">Reset</div><div class="t" style="left:1856.4px;top:2005.7px;font-size:12.48px;color:#1e1e1e;font-weight:normal;transform:scaleX(1.0936);transform-origin:0 0;">31 fps</div><div class="a" style="left:1916.0px;top:2024.0px;width:1.0px;height:1.0px;background:#aaa"></div><div class="a" style="left:1913.0px;top:2024.0px;width:1.0px;height:1.0px;background:#aaa"></div><div class="a" style="left:1910.0px;top:2024.0px;width:1.0px;height:1.0px;background:#aaa"></div><div class="a" style="left:1916.0px;top:2021.0px;width:1.0px;height:1.0px;background:#aaa"></div><div class="a" style="left:1913.0px;top:2021.0px;width:1.0px;height:1.0px;background:#aaa"></div><div class="a" style="left:1916.0px;top:2018.0px;width:1.0px;height:1.0px;background:#aaa"></div><div class="a" style="left:742.0px;top:71.0px;width:874.0px;height:1852.0px;background:#303030"></div><svg style="left:718px;top:985px;" width="16" height="20" viewBox="0 0 16 20"><path d="M10 6 v8 l-4-4z" fill="#666"/></svg><svg style="left:1625px;top:985px;" width="16" height="20" viewBox="0 0 16 20"><path d="M6 6 v8 l4-4z" fill="#666"/></svg><div class="a" style="left:742px;top:71px;width:874px;height:1852px;overflow:hidden"><svg style="left:0;top:0" width="874" height="1852"><g stroke="#9a9a9a" stroke-width="1" opacity="0.85"><line x1="689.1" y1="362.4" x2="5691.8" y2="1714.6"/><line x1="689.1" y1="362.4" x2="-2624.5" y2="972.3"/><line x1="517.8" y1="393.9" x2="6069.7" y2="2119.3"/><line x1="847.9" y1="405.3" x2="-2829.1" y2="1169.6"/><line x1="327.0" y1="429.0" x2="6646.9" y2="2737.4"/><line x1="1032.8" y1="455.3" x2="-3116.2" y2="1446.4"/><line x1="113.4" y1="468.3" x2="7637.4" y2="3798.1"/><line x1="1250.7" y1="514.2" x2="-3548.4" y2="1863.2"/><line x1="-127.6" y1="512.7" x2="9733.0" y2="6042.1"/><line x1="1511.4" y1="584.6" x2="-4272.5" y2="2561.5"/><line x1="-401.5" y1="563.1" x2="17114.7" y2="13946.8"/><line x1="1828.9" y1="670.5" x2="-5735.6" y2="3972.4"/><line x1="-715.7" y1="620.9" x2="21124.3" y2="26743.5"/><line x1="2224.0" y1="777.2" x2="-10247.5" y2="8323.4"/><line x1="-1079.5" y1="687.9" x2="8317.7" y2="26424.3"/><line x1="2729.0" y1="913.7" x2="-25071.6" y2="28408.7"/><line x1="-1506.0" y1="766.4" x2="-4383.1" y2="28430.1"/><line x1="3397.3" y1="1094.4" x2="-6082.3" y2="26981.4"/><line x1="-2012.6" y1="859.6" x2="-17558.6" y2="28068.0"/><line x1="4323.3" y1="1344.7" x2="11636.7" y2="27267.7"/><line x1="-2624.5" y1="972.3" x2="-30357.2" y2="27716.3"/><line x1="5691.8" y1="1714.6" x2="29828.8" y2="27561.7"/></g><g transform="translate(78 699) scale(0.46290)"><line x1="465" y1="490" x2="905" y2="1165" stroke="#a8a24a" stroke-width="6.5"/><line x1="1215" y1="465" x2="1215" y2="535" stroke="#a8a24a" stroke-width="6.5"/><line x1="1025" y1="690" x2="905" y2="1165" stroke="#a8a24a" stroke-width="6.5"/><line x1="880" y1="880" x2="905" y2="1165" stroke="#a8a24a" stroke-width="6.5"/><line x1="790" y1="760" x2="905" y2="1165" stroke="#a8a24a" stroke-width="6.5"/><line x1="745" y1="1010" x2="905" y2="1165" stroke="#a8a24a" stroke-width="6.5"/><line x1="910" y1="700" x2="905" y2="1165" stroke="#a8a24a" stroke-width="6.5"/><line x1="765" y1="350" x2="835" y2="348" stroke="#a8a24a" stroke-width="6.5"/><line x1="930" y1="1185" x2="1110" y2="1080" stroke="#46462a" stroke-width="7"/><line x1="860" y1="390" x2="1050" y2="495" stroke="#9a0000" stroke-width="30"/><line x1="860" y1="390" x2="1050" y2="495" stroke="#e00000" stroke-width="20.4"/><line x1="910" y1="385" x2="906" y2="880" stroke="#00009a" stroke-width="30"/><line x1="910" y1="385" x2="906" y2="880" stroke="#0000dc" stroke-width="20.4"/><line x1="560" y1="370" x2="740" y2="455" stroke="#009800" stroke-width="30"/><line x1="560" y1="370" x2="740" y2="455" stroke="#00d800" stroke-width="20.4"/><line x1="560" y1="440" x2="740" y2="520" stroke="#009800" stroke-width="30"/><line x1="560" y1="440" x2="740" y2="520" stroke="#00d800" stroke-width="20.4"/><line x1="560" y1="462" x2="740" y2="540" stroke="#009800" stroke-width="30"/><line x1="560" y1="462" x2="740" y2="540" stroke="#00d800" stroke-width="20.4"/><line x1="1040" y1="425" x2="1040" y2="930" stroke="#00009a" stroke-width="30"/><line x1="1040" y1="425" x2="1040" y2="930" stroke="#0000dc" stroke-width="20.4"/><line x1="790" y1="400" x2="790" y2="950" stroke="#00009a" stroke-width="30"/><line x1="790" y1="400" x2="790" y2="950" stroke="#0000dc" stroke-width="20.4"/><line x1="865" y1="570" x2="1190" y2="810" stroke="#9a0000" stroke-width="30"/><line x1="865" y1="570" x2="1190" y2="810" stroke="#e00000" stroke-width="20.4"/><line x1="950" y1="560" x2="1220" y2="470" stroke="#009800" stroke-width="30"/><line x1="950" y1="560" x2="1220" y2="470" stroke="#00d800" stroke-width="20.4"/><line x1="990" y1="690" x2="1270" y2="600" stroke="#009800" stroke-width="30"/><line x1="990" y1="690" x2="1270" y2="600" stroke="#00d800" stroke-width="20.4"/><line x1="680" y1="700" x2="990" y2="650" stroke="#9a0000" stroke-width="30"/><line x1="680" y1="700" x2="990" y2="650" stroke="#e00000" stroke-width="20.4"/><line x1="50" y1="390" x2="290" y2="245" stroke="#009800" stroke-width="30"/><line x1="50" y1="390" x2="290" y2="245" stroke="#00d800" stroke-width="20.4"/><line x1="228" y1="372" x2="292" y2="245" stroke="#3a0000" stroke-width="30"/><line x1="228" y1="372" x2="292" y2="245" stroke="#6a0000" stroke-width="20.4"/><circle cx="228" cy="370" r="10" fill="#ff1010"/><line x1="300" y1="250" x2="465" y2="490" stroke="#00009a" stroke-width="30"/><line x1="300" y1="250" x2="465" y2="490" stroke="#0000dc" stroke-width="20.4"/><line x1="998" y1="45" x2="993" y2="340" stroke="#9a0000" stroke-width="30"/><line x1="998" y1="45" x2="993" y2="340" stroke="#e00000" stroke-width="20.4"/><line x1="1232" y1="155" x2="1218" y2="465" stroke="#00009a" stroke-width="30"/><line x1="1232" y1="155" x2="1218" y2="465" stroke="#0000dc" stroke-width="20.4"/><line x1="480" y1="435" x2="745" y2="350" stroke="#9a0000" stroke-width="30"/><line x1="480" y1="435" x2="745" y2="350" stroke="#e00000" stroke-width="20.4"/><line x1="745" y1="350" x2="948" y2="465" stroke="#00009a" stroke-width="30"/><line x1="745" y1="350" x2="948" y2="465" stroke="#0000dc" stroke-width="20.4"/><polygon points="835,320 835,378 952,345" fill="#e0208a"/><line x1="735" y1="430" x2="990" y2="345" stroke="#009800" stroke-width="30"/><line x1="735" y1="430" x2="990" y2="345" stroke="#00d800" stroke-width="20.4"/><line x1="990" y1="345" x2="1200" y2="455" stroke="#00009a" stroke-width="30"/><line x1="990" y1="345" x2="1200" y2="455" stroke="#0000dc" stroke-width="20.4"/><polygon points="1098,362 1072,432 1168,452" fill="#d01880"/><line x1="1055" y1="490" x2="1278" y2="425" stroke="#009800" stroke-width="30"/><line x1="1055" y1="490" x2="1278" y2="425" stroke="#00d800" stroke-width="20.4"/><line x1="740" y1="380" x2="740" y2="480" stroke="#009800" stroke-width="30"/><line x1="740" y1="380" x2="740" y2="480" stroke="#00d800" stroke-width="20.4"/><line x1="469" y1="568" x2="746" y2="481" stroke="#9a0000" stroke-width="30"/><line x1="469" y1="568" x2="746" y2="481" stroke="#e00000" stroke-width="20.4"/><line x1="762" y1="564" x2="993" y2="485" stroke="#9a0000" stroke-width="30"/><line x1="762" y1="564" x2="993" y2="485" stroke="#e00000" stroke-width="20.4"/><line x1="469" y1="605" x2="746" y2="518" stroke="#9a0000" stroke-width="30"/><line x1="469" y1="605" x2="746" y2="518" stroke="#e00000" stroke-width="20.4"/><line x1="473" y1="646" x2="746" y2="555" stroke="#9a0000" stroke-width="30"/><line x1="473" y1="646" x2="746" y2="555" stroke="#e00000" stroke-width="20.4"/><line x1="473" y1="667" x2="738" y2="576" stroke="#9a0000" stroke-width="30"/><line x1="473" y1="667" x2="738" y2="576" stroke="#e00000" stroke-width="20.4"/><line x1="745" y1="480" x2="745" y2="1010" stroke="#00009a" stroke-width="30"/><line x1="745" y1="480" x2="745" y2="1010" stroke="#0000dc" stroke-width="20.4"/><line x1="895" y1="595" x2="885" y2="880" stroke="#00009a" stroke-width="30"/><line x1="895" y1="595" x2="885" y2="880" stroke="#0000dc" stroke-width="20.4"/><line x1="745" y1="575" x2="945" y2="700" stroke="#009800" stroke-width="30"/><line x1="745" y1="575" x2="945" y2="700" stroke="#00d800" stroke-width="20.4"/><line x1="790" y1="630" x2="980" y2="750" stroke="#009800" stroke-width="30"/><line x1="790" y1="630" x2="980" y2="750" stroke="#00d800" stroke-width="20.4"/><line x1="550" y1="715" x2="990" y2="660" stroke="#9a0000" stroke-width="30"/><line x1="550" y1="715" x2="990" y2="660" stroke="#e00000" stroke-width="20.4"/><line x1="550" y1="790" x2="985" y2="690" stroke="#9a0000" stroke-width="30"/><line x1="550" y1="790" x2="985" y2="690" stroke="#e00000" stroke-width="20.4"/><line x1="745" y1="740" x2="945" y2="880" stroke="#009800" stroke-width="30"/><line x1="745" y1="740" x2="945" y2="880" stroke="#00d800" stroke-width="20.4"/><line x1="830" y1="710" x2="975" y2="830" stroke="#009800" stroke-width="30"/><line x1="830" y1="710" x2="975" y2="830" stroke="#00d800" stroke-width="20.4"/><polygon points="720,725 770,725 750,650" fill="#e0208a"/><line x1="640" y1="955" x2="890" y2="860" stroke="#9a0000" stroke-width="30"/><line x1="640" y1="955" x2="890" y2="860" stroke="#e00000" stroke-width="20.4"/><polygon points="1014,585 1068,585 1050,630 1030,630" fill="#e0208a"/><line x1="1215" y1="535" x2="1215" y2="800" stroke="#00009a" stroke-width="30"/><line x1="1215" y1="535" x2="1215" y2="800" stroke="#0000dc" stroke-width="20.4"/><polygon points="1180,670 1240,670 1212,740" fill="#d01880"/><line x1="945" y1="930" x2="1200" y2="820" stroke="#009800" stroke-width="30"/><line x1="945" y1="930" x2="1200" y2="820" stroke="#00d800" stroke-width="20.4"/><line x1="945" y1="880" x2="1090" y2="990" stroke="#009800" stroke-width="30"/><line x1="945" y1="880" x2="1090" y2="990" stroke="#00d800" stroke-width="20.4"/><line x1="1200" y1="820" x2="1430" y2="965" stroke="#00009a" stroke-width="30"/><line x1="1200" y1="820" x2="1430" y2="965" stroke="#0000dc" stroke-width="20.4"/><line x1="1195" y1="820" x2="1190" y2="1020" stroke="#00009a" stroke-width="30"/><line x1="1195" y1="820" x2="1190" y2="1020" stroke="#0000dc" stroke-width="20.4"/><polygon points="1170,880 1225,880 1198,965" fill="#d01880"/><line x1="935" y1="1140" x2="1190" y2="1025" stroke="#9a0000" stroke-width="30"/><line x1="935" y1="1140" x2="1190" y2="1025" stroke="#e00000" stroke-width="20.4"/><line x1="1190" y1="1025" x2="1415" y2="1180" stroke="#009800" stroke-width="30"/><line x1="1190" y1="1025" x2="1415" y2="1180" stroke="#00d800" stroke-width="20.4"/><line x1="920" y1="985" x2="915" y2="1150" stroke="#00009a" stroke-width="9"/><line x1="920" y1="985" x2="915" y2="1150" stroke="#0000dc" stroke-width="6.1"/><line x1="715" y1="1285" x2="910" y2="1195" stroke="#9a0000" stroke-width="30"/><line x1="715" y1="1285" x2="910" y2="1195" stroke="#e00000" stroke-width="20.4"/><line x1="910" y1="1195" x2="1065" y2="1320" stroke="#009800" stroke-width="30"/><line x1="910" y1="1195" x2="1065" y2="1320" stroke="#00d800" stroke-width="20.4"/><g fill="#e0208a"><circle cx="875" cy="1145" r="22"/><circle cx="930" cy="1190" r="22"/><circle cx="905" cy="1160" r="16"/></g></g></svg></div><div class="a" style="left:1647.0px;top:62.0px;width:271.0px;height:22.0px;background:#b9b9b9"></div><svg style="left:1647px;top:62px;" width="26" height="22" viewBox="0 0 26 22"><path d="M4 7 v8 l4-4z" fill="#333"/><rect x="8" y="7.5" width="12" height="7" rx="2" fill="#444"/></svg><div class="t" style="left:1673.5px;top:67.9px;font-size:12.48px;color:#1e1e1e;font-weight:normal;transform:scaleX(1.0503);transform-origin:0 0;">Views</div><div class="a" style="left:1899.0px;top:65.0px;width:17.0px;height:17.0px;background:linear-gradient(#fff,#e6e6e6);border:1px solid #bdbdbd;border-radius:3px"></div><svg style="left:1899px;top:65px;" width="17" height="17" viewBox="0 0 17 17"><circle cx="8.5" cy="8.5" r="5.6" fill="#d8202a"/><path d="M6.3 6.3 l4.4 4.4 M10.7 6.3 l-4.4 4.4" stroke="#fff" stroke-width="1.4"/></svg><div class="t" style="left:1649.2px;top:96.2px;font-size:12.48px;color:#1e1e1e;font-weight:normal;transform:scaleX(1.0356);transform-origin:0 0;">Type:</div><div class="a" style="left:1687.6px;top:90.6px;width:142.0px;height:22.0px;background:linear-gradient(#fcfcfc,#ececec);border:1px solid #b9b9b9;border-radius:3px"></div><div class="a" style="left:1692px;top:90px;width:120px;height:22px;overflow:hidden"><div class="t" style="left:0.5px;top:6.0px;font-size:12.48px;color:#1e1e1e;font-weight:normal;transform:scaleX(1.0895);transform-origin:0 0;">Orbit (rviz_default_plugins)</div></div><svg style="left:1812px;top:95px;" width="14" height="12" viewBox="0 0 14 12"><path d="M2.5 4 h8 l-4 4z" fill="#555"/></svg><div class="a" style="left:1836.5px;top:90.6px;width:79.0px;height:22.0px;background:linear-gradient(#fcfcfc,#ececec);border:1px solid #b9b9b9;border-radius:3px"></div><div class="t" style="left:1862.2px;top:96.2px;font-size:12.48px;color:#1e1e1e;font-weight:normal;transform:scaleX(1.0763);transform-origin:0 0;">Zero</div><div class="a" style="left:1647.0px;top:121.5px;width:271.0px;height:1779.0px;background:#fff;border:1px solid #c4c4c4"></div><div class="a" style="left:1782.0px;top:122.0px;width:1.0px;height:1777.0px;background:#e2e2e2"></div><div class="t" style="left:1671.5px;top:124.3px;font-size:12.48px;color:#111;font-weight:bold;transform:scaleX(1.1492);transform-origin:0 0;">Current View</div><div class="t" style="left:1785.3px;top:124.3px;font-size:12.48px;color:#111;font-weight:bold;transform:scaleX(1.1815);transform-origin:0 0;">Orbit (rviz)</div><div class="t" style="left:1691.3px;top:139.3px;font-size:12.48px;color:#1e1e1e;font-weight:normal;transform:scaleX(1.0681);transform-origin:0 0;">Near Clip Di...</div><div class="t" style="left:1785.3px;top:139.3px;font-size:12.48px;color:#1e1e1e;font-weight:normal;transform:scaleX(1.1001);transform-origin:0 0;">0.01</div><div class="t" style="left:1691.3px;top:154.3px;font-size:12.48px;color:#1e1e1e;font-weight:normal;transform:scaleX(1.1072);transform-origin:0 0;">Invert Z Axis</div><div class="t" style="left:1691.3px;top:169.3px;font-size:12.48px;color:#1e1e1e;font-weight:normal;transform:scaleX(1.0556);transform-origin:0 0;">Target Frame</div><div class="t" style="left:1785.3px;top:169.3px;font-size:12.48px;color:#1e1e1e;font-weight:normal;transform:scaleX(1.0921);transform-origin:0 0;">&lt;Fixed Frame&gt;</div><div class="t" style="left:1691.3px;top:184.3px;font-size:12.48px;color:#1e1e1e;font-weight:normal;transform:scaleX(1.0807);transform-origin:0 0;">Distance</div><div class="t" style="left:1785.3px;top:184.3px;font-size:12.48px;color:#1e1e1e;font-weight:normal;transform:scaleX(1.1001);transform-origin:0 0;">3.31903</div><div class="t" style="left:1691.3px;top:199.3px;font-size:12.48px;color:#1e1e1e;font-weight:normal;transform:scaleX(1.0431);transform-origin:0 0;">Focal Shape...</div><div class="t" style="left:1785.3px;top:199.3px;font-size:12.48px;color:#1e1e1e;font-weight:normal;transform:scaleX(1.1001);transform-origin:0 0;">0.05</div><div class="t" style="left:1691.3px;top:214.3px;font-size:12.48px;color:#1e1e1e;font-weight:normal;transform:scaleX(1.0431);transform-origin:0 0;">Focal Shape...</div><div class="t" style="left:1691.3px;top:229.3px;font-size:12.48px;color:#1e1e1e;font-weight:normal;transform:scaleX(0.9783);transform-origin:0 0;">Yaw</div><div class="t" style="left:1785.3px;top:229.3px;font-size:12.48px;color:#1e1e1e;font-weight:normal;transform:scaleX(1.1001);transform-origin:0 0;">0.933579</div><div class="t" style="left:1691.3px;top:244.3px;font-size:12.48px;color:#1e1e1e;font-weight:normal;transform:scaleX(1.0529);transform-origin:0 0;">Pitch</div><div class="t" style="left:1785.3px;top:244.3px;font-size:12.48px;color:#1e1e1e;font-weight:normal;transform:scaleX(1.1001);transform-origin:0 0;">0.470398</div><div class="t" style="left:1691.3px;top:259.3px;font-size:12.48px;color:#1e1e1e;font-weight:normal;transform:scaleX(1.0366);transform-origin:0 0;">Focal Point</div><div class="t" style="left:1785.3px;top:259.3px;font-size:12.48px;color:#1e1e1e;font-weight:normal;transform:scaleX(1.1131);transform-origin:0 0;">0.29115; 0.20508; ...</div><svg style="left:0px;top:0px;" width="1920" height="300" viewBox="0 0 1920 300"><path d="M1654.7 127.8 h7.2 l-3.6 3.8z" fill="#5a5a5a"/><rect x="1785.8" y="153.29999999999998" width="13" height="13" fill="#fff" stroke="#a8a8a8" rx="1.5"/><rect x="1785.8" y="213.29999999999998" width="13" height="13" fill="#fff" stroke="#a8a8a8" rx="1.5"/><path d="M1788.5 219.6 l2.6 4.2 l5.2-8.6" stroke="#111" stroke-width="1.9" fill="none"/><path d="M1676.0 260.8 v7.6 l3.8-3.8z" fill="#5a5a5a"/></svg><div class="a" style="left:1649.5px;top:1907.7px;width:84.0px;height:22.0px;background:linear-gradient(#fbfbfb,#e9e9e9);border:1px solid #b9b9b9;border-radius:3px"></div><div class="t" style="left:1676.8px;top:1913.4px;font-size:12.48px;color:#1e1e1e;font-weight:normal;transform:scaleX(1.0356);transform-origin:0 0;">Save</div><div class="a" style="left:1740.0px;top:1907.7px;width:85.0px;height:22.0px;background:linear-gradient(#fbfbfb,#e9e9e9);border:1px solid #b9b9b9;border-radius:3px"></div><div class="t" style="left:1758.1px;top:1913.4px;font-size:12.48px;color:#1e1e1e;font-weight:normal;transform:scaleX(1.0480);transform-origin:0 0;">Remove</div><div class="a" style="left:1831.0px;top:1907.7px;width:85.0px;height:22.0px;background:linear-gradient(#fbfbfb,#e9e9e9);border:1px solid #b9b9b9;border-radius:3px"></div><div class="t" style="left:1848.9px;top:1913.4px;font-size:12.48px;color:#1e1e1e;font-weight:normal;transform:scaleX(1.0434);transform-origin:0 0;">Rename</div><div class="a" style="left:1920.0px;top:2.0px;width:1919.0px;height:2025.0px;background:#fff"></div><div class="a" style="left:1920.0px;top:2.0px;width:1919.0px;height:40.0px;background:#e3dbf7"></div><svg style="left:1930px;top:10px;" width="26" height="26" viewBox="0 0 26 26"><path d="M6.5 3 h15 v18.5 h-18" fill="none" stroke="#20124d" stroke-width="1.8"/><rect x="2.2" y="2.2" width="3.2" height="3" fill="#20124d"/><rect x="2.2" y="8" width="3.2" height="14.3" fill="#20124d"/></svg><div class="a" style="left:1964.2px;top:10.2px;width:39.6px;height:23.7px;background:#cdbff2;border-radius:12px"></div><div class="t" style="left:1972.5px;top:17.2px;font-size:11.5px;color:#2b2540;font-weight:normal;transform:scaleX(0.9934);transform-origin:0 0;">Beta</div><div class="t" style="left:2020.6px;top:17.2px;font-size:11.5px;color:#2b2540;font-weight:normal;transform:scaleX(1.0092);transform-origin:0 0;">File</div><div class="t" style="left:2063.8px;top:17.2px;font-size:11.5px;color:#2b2540;font-weight:normal;transform:scaleX(1.0194);transform-origin:0 0;">Edit</div><div class="t" style="left:2108.6px;top:17.2px;font-size:11.5px;color:#2b2540;font-weight:normal;transform:scaleX(1.0519);transform-origin:0 0;">View</div><div class="t" style="left:2159.4px;top:17.2px;font-size:11.5px;color:#2b2540;font-weight:normal;transform:scaleX(1.0014);transform-origin:0 0;">Process</div><div class="t" style="left:2225.6px;top:17.2px;font-size:11.5px;color:#2b2540;font-weight:normal;transform:scaleX(1.0151);transform-origin:0 0;">Scene</div><div class="t" style="left:2283.3px;top:17.2px;font-size:11.5px;color:#2b2540;font-weight:normal;transform:scaleX(1.0709);transform-origin:0 0;">Window</div><div class="t" style="left:2351.3px;top:17.2px;font-size:11.5px;color:#2b2540;font-weight:normal;transform:scaleX(1.0444);transform-origin:0 0;">Help</div><div class="t" style="left:2690.6px;top:17.2px;font-size:11.5px;color:#1d1540;font-weight:bold;transform:scaleX(0.9979);transform-origin:0 0;">bluebird_caw:caw_application</div><div class="t" style="left:2861.0px;top:17.2px;font-size:11.5px;color:#1d1540;font-weight:normal;transform:scaleX(1.0094);transform-origin:0 0;">· Executing on</div><div class="a" style="left:2940.4px;top:10.1px;width:129.3px;height:23.7px;border:2px solid #22165a;border-radius:2px"></div><div class="t" style="left:2948.7px;top:16.6px;font-size:11px;color:#1d1540;font-weight:normal;font-family:'Liberation Mono',monospace;transform:scaleX(0.9588);transform-origin:0 0;">Simulation</div><svg style="left:3046px;top:18px;" width="14" height="8" viewBox="0 0 14 8"><path d="M2 1 h9 l-4.5 4.5z" fill="#1d1540"/></svg><svg style="left:3778px;top:12px;" width="20" height="20" viewBox="0 0 20 20"><circle cx="9.8" cy="9.7" r="6.3" fill="none" stroke="#1a1a1a" stroke-width="1.4"/><path d="M7.7 7.8 q0-2.3 2.1-2.3 q2.2 0 2.2 2 q0 1.3-1.3 2 q-0.9 0.5-0.9 1.8" fill="none" stroke="#1a1a1a" stroke-width="1.3"/><circle cx="9.8" cy="13.4" r="0.8" fill="#1a1a1a"/></svg><svg style="left:3810px;top:12px;" width="20" height="20" viewBox="0 0 20 20"><circle cx="10" cy="7.3" r="2.3" fill="none" stroke="#1a1a1a" stroke-width="1.4"/><path d="M4.8 14.8 q5.2-4 10.4 0z" fill="none" stroke="#1a1a1a" stroke-width="1.6"/></svg><div class="a" style="left:1920.0px;top:42.0px;width:6.0px;height:1985.0px;background:linear-gradient(90deg,rgba(0,0,0,.10),rgba(0,0,0,0))"></div><div class="a" style="left:1920.0px;top:42.0px;width:287.0px;height:32.0px;background:#eeeeee"></div><div class="a" style="left:2207.0px;top:42.0px;width:2.0px;height:1985.0px;background:#c4c4c4"></div><svg style="left:1928px;top:50px;" width="16" height="16" viewBox="0 0 16 16"><g stroke="#2a2a2a" stroke-width="1.6"><path d="M2 3.5 h12 M2 8 h12 M2 12.5 h12"/></g><g fill="#2a2a2a"><rect x="9" y="1.5" width="1.8" height="4"/><rect x="4.5" y="6" width="1.8" height="4"/><rect x="7" y="10.5" width="1.8" height="4"/></g></svg><div class="t" style="left:1952.5px;top:52.9px;font-size:12px;color:#1f1f1f;font-weight:600;transform:scaleX(0.9519);transform-origin:0 0;">Properties</div><svg style="left:2181px;top:54px;" width="12" height="8" viewBox="0 0 12 8"><path d="M1.5 1.5 l4.5 4.5 l4.5-4.5" fill="none" stroke="#2a2a2a" stroke-width="1.6"/></svg><div class="t" style="left:1949.0px;top:83.8px;font-size:12px;color:#5b36d6;font-weight:600;transform:scaleX(0.9479);transform-origin:0 0;">Details</div><div class="t" style="left:2043.8px;top:84.4px;font-size:12px;color:#1f1f1f;font-weight:normal;transform:scaleX(0.9979);transform-origin:0 0;">Control</div><div class="t" style="left:2136.8px;top:84.4px;font-size:12px;color:#1f1f1f;font-weight:normal;transform:scaleX(1.0010);transform-origin:0 0;">Settings</div><div class="a" style="left:1920.0px;top:104.0px;width:96.0px;height:2.0px;background:#5b36d6"></div><div class="t" style="left:1936.0px;top:124.4px;font-size:11.5px;color:#1f1f1f;font-weight:bold;transform:scaleX(0.9951);transform-origin:0 0;">Properties</div><svg style="left:2001px;top:124px;" width="12" height="12" viewBox="0 0 12 12"><circle cx="6" cy="6" r="4.6" fill="none" stroke="#333" stroke-width="1.1"/><path d="M6 4.6 v4" stroke="#333" stroke-width="1.2"/><circle cx="6" cy="3.2" r=".65" fill="#333"/></svg><svg style="left:2144px;top:122px;" width="14" height="16" viewBox="0 0 14 16"><path d="M3 4 h8 v10 h-8z" fill="none" stroke="#222" stroke-width="1.5"/><path d="M2 3 h10 M5.5 1.5 h3" stroke="#222" stroke-width="1.5"/></svg><svg style="left:2172px;top:126.5px;" width="12" height="8" viewBox="0 0 12 8"><path d="M1.5 1.5 l4.5 4.5 l4.5-4.5" fill="none" stroke="#2a2a2a" stroke-width="1.6"/></svg><div class="t" style="left:1936.0px;top:156.7px;font-size:11.5px;color:#1f1f1f;font-weight:normal;transform:scaleX(1.0106);transform-origin:0 0;">Name</div><svg style="left:1971.5px;top:156.3px;" width="12" height="12" viewBox="0 0 12 12"><circle cx="6" cy="6" r="4.6" fill="none" stroke="#333" stroke-width="1.1"/><path d="M6 4.6 v4" stroke="#333" stroke-width="1.2"/><circle cx="6" cy="3.2" r=".65" fill="#333"/></svg><div class="a" style="left:1936.0px;top:174.3px;width:223.0px;height:23.3px;border:1px solid #cfcfcf;border-radius:2px;background:#fff"></div><div class="t" style="left:1945.0px;top:180.4px;font-size:11.5px;color:#8a8a8a;font-weight:normal;font-family:'Liberation Mono',monospace;transform:scaleX(0.9418);transform-origin:0 0;">ur3e_robot</div><div class="a" style="left:2167.0px;top:174.3px;width:24.0px;height:23.3px;background:#e5e5e5;border-radius:2px"></div><svg style="left:2171px;top:178px;" width="16" height="16" viewBox="0 0 16 16"><path d="M3.5 12.5 l1-3.2 l6.5-6.5 l2.2 2.2 l-6.5 6.5z" fill="none" stroke="#9a9a9a" stroke-width="1.2"/></svg><div class="t" style="left:1936.0px;top:212.7px;font-size:11.5px;color:#1f1f1f;font-weight:normal;transform:scaleX(1.0337);transform-origin:0 0;">Asset type</div><div class="t" style="left:1996.5px;top:212.7px;font-size:11.5px;color:#8c8c8c;font-weight:normal;transform:scaleX(1.0754);transform-origin:0 0;">object</div><div class="t" style="left:1936.0px;top:244.4px;font-size:11.5px;color:#1f1f1f;font-weight:normal;transform:scaleX(0.9709);transform-origin:0 0;">Tag</div><svg style="left:1959px;top:244px;" width="12" height="12" viewBox="0 0 12 12"><circle cx="6" cy="6" r="4.6" fill="none" stroke="#333" stroke-width="1.1"/><path d="M6 4.6 v4" stroke="#333" stroke-width="1.2"/><circle cx="6" cy="3.2" r=".65" fill="#333"/></svg><div class="t" style="left:1975.5px;top:244.4px;font-size:11.5px;color:#8c8c8c;font-weight:normal;transform:scaleX(1.0321);transform-origin:0 0;">hardware_module</div><div class="t" style="left:1936.0px;top:276.7px;font-size:11.5px;color:#1f1f1f;font-weight:normal;transform:scaleX(1.0125);transform-origin:0 0;">Asset ID</div><svg style="left:1985px;top:276.3px;" width="12" height="12" viewBox="0 0 12 12"><circle cx="6" cy="6" r="4.6" fill="none" stroke="#333" stroke-width="1.1"/><path d="M6 4.6 v4" stroke="#333" stroke-width="1.2"/><circle cx="6" cy="3.2" r=".65" fill="#333"/></svg><div class="t" style="left:2001.0px;top:276.7px;font-size:11.5px;color:#8c8c8c;font-weight:normal;transform:scaleX(1.0365);transform-origin:0 0;">ai.intrinsic.ur3e_hardware_modul...</div><div class="a" style="left:1920.0px;top:310.0px;width:287.0px;height:1.0px;background:#d0d0d0"></div><div class="t" style="left:1936.0px;top:329.4px;font-size:11.5px;color:#1f1f1f;font-weight:bold;transform:scaleX(0.9642);transform-origin:0 0;">Pose</div><svg style="left:1971px;top:329px;" width="12" height="12" viewBox="0 0 12 12"><circle cx="6" cy="6" r="4.6" fill="none" stroke="#333" stroke-width="1.1"/><path d="M6 4.6 v4" stroke="#333" stroke-width="1.2"/><circle cx="6" cy="3.2" r=".65" fill="#333"/></svg><svg style="left:2086px;top:325px;" width="18" height="20" viewBox="0 0 18 20"><rect x="5" y="5" width="8.5" height="10.5" rx="1" fill="none" stroke="#222" stroke-width="1.4"/><path d="M3 12.5 v-9.5 h8" fill="none" stroke="#222" stroke-width="1.4"/></svg><svg style="left:2113px;top:325px;" width="18" height="20" viewBox="0 0 18 20"><rect x="3.5" y="4" width="10" height="11.5" rx="1" fill="none" stroke="#222" stroke-width="1.5"/><rect x="6" y="2.5" width="5" height="3" fill="#222"/></svg><svg style="left:2141px;top:325px;" width="18" height="20" viewBox="0 0 18 20"><path d="M9 3 v8 l-6 4 M9 11 l6 4" fill="none" stroke="#222" stroke-width="1.4"/></svg><svg style="left:2172px;top:331.5px;" width="12" height="8" viewBox="0 0 12 8"><path d="M1.5 1.5 l4.5 4.5 l4.5-4.5" fill="none" stroke="#2a2a2a" stroke-width="1.6"/></svg><div class="t" style="left:1936.0px;top:365.4px;font-size:11.5px;color:#1f1f1f;font-weight:normal;">X</div><svg style="left:1947.5px;top:365px;" width="12" height="12" viewBox="0 0 12 12"><circle cx="6" cy="6" r="4.6" fill="none" stroke="#333" stroke-width="1.1"/><path d="M6 4.6 v4" stroke="#333" stroke-width="1.2"/><circle cx="6" cy="3.2" r=".65" fill="#333"/></svg><div class="a" style="left:1963.6px;top:359.6px;width:51.9px;height:22.9px;border:1px solid #cfcfcf;border-radius:2px;background:#fff"></div><div class="t" style="left:1972.6px;top:365.4px;font-size:11.5px;color:#1f1f1f;font-weight:normal;font-family:'Liberation Mono',monospace;transform:scaleX(0.9800);transform-origin:0 0;">0.32</div><div class="t" style="left:2023.7px;top:365.4px;font-size:11.5px;color:#1f1f1f;font-weight:normal;">Y</div><svg style="left:2034.7px;top:365px;" width="12" height="12" viewBox="0 0 12 12"><circle cx="6" cy="6" r="4.6" fill="none" stroke="#333" stroke-width="1.1"/><path d="M6 4.6 v4" stroke="#333" stroke-width="1.2"/><circle cx="6" cy="3.2" r=".65" fill="#333"/></svg><div class="a" style="left:2051.4px;top:359.6px;width:51.1px;height:22.9px;border:1px solid #cfcfcf;border-radius:2px;background:#fff"></div><div class="t" style="left:2060.4px;top:365.4px;font-size:11.5px;color:#1f1f1f;font-weight:normal;font-family:'Liberation Mono',monospace;transform:scaleX(0.9800);transform-origin:0 0;">0.685</div><div class="t" style="left:2111.0px;top:365.4px;font-size:11.5px;color:#1f1f1f;font-weight:normal;">Z</div><svg style="left:2122px;top:365px;" width="12" height="12" viewBox="0 0 12 12"><circle cx="6" cy="6" r="4.6" fill="none" stroke="#333" stroke-width="1.1"/><path d="M6 4.6 v4" stroke="#333" stroke-width="1.2"/><circle cx="6" cy="3.2" r=".65" fill="#333"/></svg><div class="a" style="left:2138.4px;top:359.6px;width:51.0px;height:22.9px;border:1px solid #cfcfcf;border-radius:2px;background:#fff"></div><div class="t" style="left:2147.4px;top:365.4px;font-size:11.5px;color:#1f1f1f;font-weight:normal;font-family:'Liberation Mono',monospace;transform:scaleX(0.9800);transform-origin:0 0;">0.658</div><div class="t" style="left:1936.0px;top:397.4px;font-size:11.5px;color:#1f1f1f;font-weight:normal;">RX</div><svg style="left:1955.5px;top:397px;" width="12" height="12" viewBox="0 0 12 12"><circle cx="6" cy="6" r="4.6" fill="none" stroke="#333" stroke-width="1.1"/><path d="M6 4.6 v4" stroke="#333" stroke-width="1.2"/><circle cx="6" cy="3.2" r=".65" fill="#333"/></svg><div class="a" style="left:1971.6px;top:391.3px;width:43.9px;height:23.3px;border:1px solid #cfcfcf;border-radius:2px;background:#fff"></div><div class="t" style="left:1980.6px;top:397.3px;font-size:11.5px;color:#1f1f1f;font-weight:normal;font-family:'Liberation Mono',monospace;transform:scaleX(0.9800);transform-origin:0 0;">0</div><div class="t" style="left:2023.7px;top:397.4px;font-size:11.5px;color:#1f1f1f;font-weight:normal;">RY</div><svg style="left:2043.5px;top:397px;" width="12" height="12" viewBox="0 0 12 12"><circle cx="6" cy="6" r="4.6" fill="none" stroke="#333" stroke-width="1.1"/><path d="M6 4.6 v4" stroke="#333" stroke-width="1.2"/><circle cx="6" cy="3.2" r=".65" fill="#333"/></svg><div class="a" style="left:2059.5px;top:391.3px;width:43.0px;height:23.3px;border:1px solid #cfcfcf;border-radius:2px;background:#fff"></div><div class="t" style="left:2068.5px;top:397.3px;font-size:11.5px;color:#1f1f1f;font-weight:normal;font-family:'Liberation Mono',monospace;transform:scaleX(0.9800);transform-origin:0 0;">0</div><div class="t" style="left:2111.0px;top:397.4px;font-size:11.5px;color:#1f1f1f;font-weight:normal;">RZ</div><svg style="left:2131.5px;top:397px;" width="12" height="12" viewBox="0 0 12 12"><circle cx="6" cy="6" r="4.6" fill="none" stroke="#333" stroke-width="1.1"/><path d="M6 4.6 v4" stroke="#333" stroke-width="1.2"/><circle cx="6" cy="3.2" r=".65" fill="#333"/></svg><div class="a" style="left:2146.4px;top:391.3px;width:43.0px;height:23.3px;border:1px solid #cfcfcf;border-radius:2px;background:#fff"></div><div class="t" style="left:2155.4px;top:397.3px;font-size:11.5px;color:#1f1f1f;font-weight:normal;font-family:'Liberation Mono',monospace;transform:scaleX(0.9800);transform-origin:0 0;">0</div><div class="t" style="left:1936.0px;top:429.4px;font-size:11.5px;color:#1f1f1f;font-weight:normal;transform:scaleX(1.0217);transform-origin:0 0;">Reference frame</div><svg style="left:2028px;top:429px;" width="12" height="12" viewBox="0 0 12 12"><circle cx="6" cy="6" r="4.6" fill="none" stroke="#333" stroke-width="1.1"/><path d="M6 4.6 v4" stroke="#333" stroke-width="1.2"/><circle cx="6" cy="3.2" r=".65" fill="#333"/></svg><div class="a" style="left:2044.6px;top:423.8px;width:145.7px;height:22.7px;border:1px solid #cfcfcf;border-radius:2px;background:#fff"></div><div class="t" style="left:2053.0px;top:429.5px;font-size:11.5px;color:#1f1f1f;font-weight:normal;font-family:'Liberation Mono',monospace;transform:scaleX(0.9800);transform-origin:0 0;">World</div><svg style="left:2168px;top:431px;" width="12" height="8" viewBox="0 0 12 8"><path d="M1.5 1.5 h7 l-3.5 3.5z" fill="#222"/></svg><div class="a" style="left:1920.0px;top:463.0px;width:287.0px;height:1.0px;background:#d0d0d0"></div><div class="t" style="left:1936.0px;top:482.6px;font-size:11.5px;color:#1f1f1f;font-weight:bold;transform:scaleX(0.9547);transform-origin:0 0;">Physics</div><svg style="left:1986px;top:482.2px;" width="12" height="12" viewBox="0 0 12 12"><circle cx="6" cy="6" r="4.6" fill="none" stroke="#333" stroke-width="1.1"/><path d="M6 4.6 v4" stroke="#333" stroke-width="1.2"/><circle cx="6" cy="3.2" r=".65" fill="#333"/></svg><svg style="left:2172px;top:484.5px;" width="12" height="8" viewBox="0 0 12 8"><path d="M1.5 1.5 l4.5 4.5 l4.5-4.5" fill="none" stroke="#2a2a2a" stroke-width="1.6"/></svg><div class="a" style="left:1941.0px;top:517.2px;width:13.8px;height:13.4px;border:1.6px solid #222;border-radius:1px"></div><div class="t" style="left:1965.3px;top:518.4px;font-size:11.5px;color:#1f1f1f;font-weight:normal;transform:scaleX(1.0382);transform-origin:0 0;">Set as static object</div><svg style="left:2068.5px;top:518px;" width="12" height="12" viewBox="0 0 12 12"><circle cx="6" cy="6" r="4.6" fill="none" stroke="#333" stroke-width="1.1"/><path d="M6 4.6 v4" stroke="#333" stroke-width="1.2"/><circle cx="6" cy="3.2" r=".65" fill="#333"/></svg><div class="a" style="left:1941.0px;top:548.5px;width:14.0px;height:14.0px;background:#5b36d6;border-radius:1px"></div><svg style="left:1941px;top:548.5px;" width="14" height="14" viewBox="0 0 14 14"><path d="M3.2 7.2 l2.7 2.7 l5-5.2" fill="none" stroke="#fff" stroke-width="1.5"/></svg><div class="t" style="left:1965.3px;top:550.4px;font-size:11.5px;color:#1f1f1f;font-weight:normal;transform:scaleX(1.0239);transform-origin:0 0;">Enable collisions</div><svg style="left:2057.5px;top:550px;" width="12" height="12" viewBox="0 0 12 12"><circle cx="6" cy="6" r="4.6" fill="none" stroke="#333" stroke-width="1.1"/><path d="M6 4.6 v4" stroke="#333" stroke-width="1.2"/><circle cx="6" cy="3.2" r=".65" fill="#333"/></svg><div class="t" style="left:1936.0px;top:578.8px;font-size:11.5px;color:#1f1f1f;font-weight:normal;transform:scaleX(1.0527);transform-origin:0 0;">Margin</div><svg style="left:1977px;top:578.4px;" width="12" height="12" viewBox="0 0 12 12"><circle cx="6" cy="6" r="4.6" fill="none" stroke="#333" stroke-width="1.1"/><path d="M6 4.6 v4" stroke="#333" stroke-width="1.2"/><circle cx="6" cy="3.2" r=".65" fill="#333"/></svg><div class="a" style="left:1936.0px;top:596.7px;width:254.5px;height:22.9px;border:1px solid #cfcfcf;border-radius:2px;background:#fff"></div><div class="t" style="left:1945.0px;top:602.5px;font-size:11.5px;color:#1f1f1f;font-weight:normal;font-family:'Liberation Mono',monospace;transform:scaleX(0.9800);transform-origin:0 0;">0</div><div class="a" style="left:1920.0px;top:636.0px;width:287.0px;height:1.0px;background:#d0d0d0"></div><div class="t" style="left:1936.0px;top:655.6px;font-size:11.5px;color:#1f1f1f;font-weight:bold;transform:scaleX(0.9680);transform-origin:0 0;">Collision</div><svg style="left:1990.5px;top:655.2px;" width="12" height="12" viewBox="0 0 12 12"><circle cx="6" cy="6" r="4.6" fill="none" stroke="#333" stroke-width="1.1"/><path d="M6 4.6 v4" stroke="#333" stroke-width="1.2"/><circle cx="6" cy="3.2" r=".65" fill="#333"/></svg><svg style="left:2172px;top:657.5px;" width="12" height="8" viewBox="0 0 12 8"><path d="M1.5 1.5 l4.5 4.5 l4.5-4.5" fill="none" stroke="#2a2a2a" stroke-width="1.6"/></svg><div class="t" style="left:1936.0px;top:687.4px;font-size:11.5px;color:#1f1f1f;font-weight:normal;transform:scaleX(1.0364);transform-origin:0 0;">Collision exclusions</div><svg style="left:2043.5px;top:687px;" width="12" height="12" viewBox="0 0 12 12"><circle cx="6" cy="6" r="4.6" fill="none" stroke="#333" stroke-width="1.1"/><path d="M6 4.6 v4" stroke="#333" stroke-width="1.2"/><circle cx="6" cy="3.2" r=".65" fill="#333"/></svg><div class="a" style="left:1936.0px;top:705.6px;width:254.5px;height:23.0px;border:1px solid #d6ccf6;border-radius:2px"></div><div class="t" style="left:2006.0px;top:711.4px;font-size:11.5px;color:#5b36d6;font-weight:normal;transform:scaleX(1.0251);transform-origin:0 0;">Manage Collisions (0)</div><div class="a" style="left:1920.0px;top:745.0px;width:287.0px;height:1.0px;background:#d0d0d0"></div><div class="t" style="left:1936.0px;top:764.2px;font-size:11.5px;color:#1f1f1f;font-weight:bold;transform:scaleX(0.9893);transform-origin:0 0;">Joints</div><svg style="left:1977px;top:763.8px;" width="12" height="12" viewBox="0 0 12 12"><circle cx="6" cy="6" r="4.6" fill="none" stroke="#333" stroke-width="1.1"/><path d="M6 4.6 v4" stroke="#333" stroke-width="1.2"/><circle cx="6" cy="3.2" r=".65" fill="#333"/></svg><svg style="left:2172px;top:766px;" width="12" height="8" viewBox="0 0 12 8"><path d="M1.5 1.5 l4.5 4.5 l4.5-4.5" fill="none" stroke="#2a2a2a" stroke-width="1.6"/></svg><div class="t" style="left:1936.0px;top:800.1px;font-size:11.5px;color:#1f1f1f;font-weight:normal;transform:scaleX(0.9469);transform-origin:0 0;">J1</div><svg style="left:1950.5px;top:799.7px;" width="12" height="12" viewBox="0 0 12 12"><circle cx="6" cy="6" r="4.6" fill="none" stroke="#333" stroke-width="1.1"/><path d="M6 4.6 v4" stroke="#333" stroke-width="1.2"/><circle cx="6" cy="3.2" r=".65" fill="#333"/></svg><div class="t" style="left:1971.0px;top:800.1px;font-size:11.5px;color:#8c8c8c;font-weight:normal;transform:scaleX(0.9500);transform-origin:0 0;">89.99</div><div class="t" style="left:2067.0px;top:800.1px;font-size:11.5px;color:#1f1f1f;font-weight:normal;transform:scaleX(0.9469);transform-origin:0 0;">J2</div><svg style="left:2081.5px;top:799.7px;" width="12" height="12" viewBox="0 0 12 12"><circle cx="6" cy="6" r="4.6" fill="none" stroke="#333" stroke-width="1.1"/><path d="M6 4.6 v4" stroke="#333" stroke-width="1.2"/><circle cx="6" cy="3.2" r=".65" fill="#333"/></svg><div class="t" style="left:2105.3px;top:800.1px;font-size:11.5px;color:#8c8c8c;font-weight:normal;transform:scaleX(0.9500);transform-origin:0 0;">-89.99</div><div class="t" style="left:1936.0px;top:832.2px;font-size:11.5px;color:#1f1f1f;font-weight:normal;transform:scaleX(0.9469);transform-origin:0 0;">J3</div><svg style="left:1950.5px;top:831.8px;" width="12" height="12" viewBox="0 0 12 12"><circle cx="6" cy="6" r="4.6" fill="none" stroke="#333" stroke-width="1.1"/><path d="M6 4.6 v4" stroke="#333" stroke-width="1.2"/><circle cx="6" cy="3.2" r=".65" fill="#333"/></svg><div class="t" style="left:1973.8px;top:832.2px;font-size:11.5px;color:#8c8c8c;font-weight:normal;transform:scaleX(0.9500);transform-origin:0 0;">89.99</div><div class="t" style="left:2067.0px;top:832.2px;font-size:11.5px;color:#1f1f1f;font-weight:normal;transform:scaleX(0.9469);transform-origin:0 0;">J4</div><svg style="left:2081.5px;top:831.8px;" width="12" height="12" viewBox="0 0 12 12"><circle cx="6" cy="6" r="4.6" fill="none" stroke="#333" stroke-width="1.1"/><path d="M6 4.6 v4" stroke="#333" stroke-width="1.2"/><circle cx="6" cy="3.2" r=".65" fill="#333"/></svg><div class="t" style="left:2105.3px;top:832.2px;font-size:11.5px;color:#8c8c8c;font-weight:normal;transform:scaleX(0.9500);transform-origin:0 0;">-89.99</div><div class="t" style="left:1936.0px;top:864.3px;font-size:11.5px;color:#1f1f1f;font-weight:normal;transform:scaleX(0.9469);transform-origin:0 0;">J5</div><svg style="left:1950.5px;top:863.9px;" width="12" height="12" viewBox="0 0 12 12"><circle cx="6" cy="6" r="4.6" fill="none" stroke="#333" stroke-width="1.1"/><path d="M6 4.6 v4" stroke="#333" stroke-width="1.2"/><circle cx="6" cy="3.2" r=".65" fill="#333"/></svg><div class="t" style="left:1973.8px;top:864.3px;font-size:11.5px;color:#8c8c8c;font-weight:normal;transform:scaleX(0.9500);transform-origin:0 0;">-89.99</div><div class="t" style="left:2067.0px;top:864.3px;font-size:11.5px;color:#1f1f1f;font-weight:normal;transform:scaleX(0.9469);transform-origin:0 0;">J6</div><svg style="left:2081.5px;top:863.9px;" width="12" height="12" viewBox="0 0 12 12"><circle cx="6" cy="6" r="4.6" fill="none" stroke="#333" stroke-width="1.1"/><path d="M6 4.6 v4" stroke="#333" stroke-width="1.2"/><circle cx="6" cy="3.2" r=".65" fill="#333"/></svg><div class="t" style="left:2105.3px;top:864.3px;font-size:11.5px;color:#8c8c8c;font-weight:normal;transform:scaleX(0.9500);transform-origin:0 0;">179.91</div><div class="a" style="left:2209.0px;top:42.0px;width:513.0px;height:32.0px;background:#eeeeee"></div><svg style="left:2216px;top:50px;" width="16" height="16" viewBox="0 0 16 16"><g fill="none" stroke="#2a2a2a" stroke-width="1.3"><rect x="1.5" y="2" width="4" height="4"/><rect x="10" y="1.5" width="4.5" height="3.5"/><rect x="10" y="7" width="4.5" height="3.5"/><rect x="10" y="12" width="4.5" height="3"/><path d="M5.5 4 h4.5 M7.5 4 v10 h2.5 M7.5 8.8 h2.5"/></g></svg><div class="t" style="left:2240.4px;top:53.4px;font-size:11.5px;color:#1f1f1f;font-weight:600;transform:scaleX(0.9777);transform-origin:0 0;">Process editor - Execute in full physics sim</div><div class="a" style="left:2209.0px;top:74.0px;width:513.0px;height:1358.0px;background-color:#f9f9f9;background-image:linear-gradient(90deg,#f9f9f9 6px,transparent 6px),linear-gradient(#f9f9f9 6px,#c2c2c2 6px);background-size:8px 8px,8px 8px;background-position:-3px -3px,-3px -3px"></div><div class="a" style="left:2722.0px;top:42.0px;width:2.0px;height:1985.0px;background:#bdbdbd"></div><div class="a" style="left:2400.3px;top:82.3px;width:129.3px;height:24.9px;background:#fff;border:1px solid #c8c8c8;border-radius:2px"></div><svg style="left:2400px;top:82px;" width="130" height="25" viewBox="0 0 130 25"><path d="M14.5 9 v7.5 l6.5-3.75z" fill="none" stroke="#222" stroke-width="1.4" stroke-linejoin="round"/><rect x="45" y="8.5" width="8" height="8" fill="none" stroke="#9a9a9a" stroke-width="1.3"/><path d="M77.5 9.5 v7 l5-3.5z M84.5 9 v8" fill="none" stroke="#222" stroke-width="1.4"/><path d="M107 10.5 h5 v-3 l5.5 5 l-5.5 5 v-3 h-5z" fill="none" stroke="#aaa" stroke-width="1.2"/></svg><div class="a" style="left:2387.1px;top:118.5px;width:155.6px;height:47.0px;background:#fff;border:1px solid #9e9e9e;border-radius:23.5px"></div><div class="t" style="left:2438.5px;top:127.8px;font-size:11.5px;color:#1f1f1f;font-weight:bold;transform:scaleX(0.9962);transform-origin:0 0;">untitled_1</div><svg style="left:2444px;top:145px;" width="12" height="12" viewBox="0 0 12 12"><g fill="none" stroke="#222" stroke-width="1.1"><rect x="1" y="1.5" width="3" height="3"/><rect x="7.5" y="1" width="3" height="2.5"/><rect x="7.5" y="5" width="3" height="2.5"/><rect x="7.5" y="9" width="3" height="2.5"/><path d="M4 3 h3.5 M6 3 v7.3 h1.5 M6 6.2 h1.5"/></g></svg><div class="t" style="left:2459.5px;top:145.5px;font-size:11.5px;color:#1f1f1f;font-weight:normal;transform:scaleX(1.0912);transform-origin:0 0;">Start</div><div class="a" style="left:2383.0px;top:193.9px;width:164.0px;height:49.7px;background:#e9e6f6"></div><div class="a" style="left:2387.1px;top:198.0px;width:155.6px;height:41.5px;background:#e2deec;border:1px solid #7d7d7d;border-radius:1px"></div><svg style="left:2458.8px;top:165.5px;" width="12" height="33.0" viewBox="0 0 12 33.0"><line x1="6" y1="0" x2="6" y2="28.0" stroke="#555" stroke-width="1.6"/><path d="M2 27.0 h8 l-4 6z" fill="#333"/></svg><div class="t" style="left:2394.4px;top:203.8px;font-size:11.5px;color:#1f1f1f;font-weight:bold;transform:scaleX(0.9696);transform-origin:0 0;">say_skill_cc</div><svg style="left:2393px;top:221px;" width="13" height="13" viewBox="0 0 13 13"><path d="M5.5 2 q.6 4.2 4.3 4.5 q-3.7.4-4.3 4.5 q-.6-4.1-4.3-4.5 q3.7-.3 4.3-4.5z" fill="none" stroke="#222" stroke-width="1.1"/><path d="M10.5 .5 v3 M9 2 h3 M10.5 9 v3 M9 10.5 h3" stroke="#222" stroke-width=".9"/></svg><div class="t" style="left:2410.0px;top:221.9px;font-size:11.5px;color:#1f1f1f;font-weight:normal;transform:scaleX(1.0187);transform-origin:0 0;">say_skill_cc</div><svg style="left:2458.8px;top:239.5px;" width="12" height="32.5" viewBox="0 0 12 32.5"><line x1="6" y1="0" x2="6" y2="27.5" stroke="#555" stroke-width="1.6"/><path d="M2 26.5 h8 l-4 6z" fill="#333"/></svg><div class="a" style="left:2453.0px;top:272.0px;width:23.8px;height:23.6px;background:#5a2fd8;border-radius:2px"></div><svg style="left:2453px;top:272px;" width="24" height="24" viewBox="0 0 24 24"><rect x="6" y="6" width="12" height="12" fill="none" stroke="#fff" stroke-width="1.4"/><path d="M12 8.5 v7 M8.5 12 h7" stroke="#fff" stroke-width="1.6"/></svg><div class="a" style="left:2209.0px;top:1431.0px;width:513.0px;height:1.0px;background:#bcbcbc"></div><div class="a" style="left:2457.0px;top:1430.0px;width:16.0px;height:2.0px;background:#999"></div><div class="a" style="left:2209.0px;top:1432.0px;width:513.0px;height:33.0px;background:#eeeeee"></div><svg style="left:2216px;top:1441px;" width="15" height="15" viewBox="0 0 15 15"><rect x="1.5" y="1.5" width="11" height="11" rx="1" fill="none" stroke="#2a2a2a" stroke-width="1.3"/><rect x="4" y="4" width="3" height="2.5" fill="#2a2a2a"/><rect x="4" y="7.5" width="3" height="2.5" fill="#2a2a2a"/><path d="M8.5 5 h2.5 M8.5 8.8 h2.5 M13.5 4 v2 M13.5 8 v2" stroke="#2a2a2a" stroke-width="1.1"/></svg><div class="t" style="left:2240.5px;top:1444.4px;font-size:11.5px;color:#1f1f1f;font-weight:600;transform:scaleX(1.0098);transform-origin:0 0;">Variables</div><svg style="left:2695px;top:1445px;" width="12" height="8" viewBox="0 0 12 8"><path d="M1.5 1.5 l4.5 4.5 l4.5-4.5" fill="none" stroke="#2a2a2a" stroke-width="1.6"/></svg><div class="a" style="left:2209.0px;top:1465.0px;width:513.0px;height:562.0px;background:#fff"></div><div class="t" style="left:2224.5px;top:1487.4px;font-size:11.5px;color:#1f1f1f;font-weight:600;transform:scaleX(0.9639);transform-origin:0 0;">&quot;untitled_1&quot; variables</div><svg style="left:2343px;top:1487px;" width="12" height="12" viewBox="0 0 12 12"><circle cx="6" cy="6" r="4.6" fill="none" stroke="#333" stroke-width="1.1"/><path d="M6 4.6 v4" stroke="#333" stroke-width="1.2"/><circle cx="6" cy="3.2" r=".65" fill="#333"/></svg><div class="t" style="left:2232.8px;top:1523.4px;font-size:11.5px;color:#1f1f1f;font-weight:600;transform:scaleX(1.0057);transform-origin:0 0;">Name</div><svg style="left:2279px;top:1522px;" width="12" height="14" viewBox="0 0 12 14"><path d="M3.5 11 v-8.5 M1.5 4.5 l2-2.5 l2 2.5" fill="none" stroke="#111" stroke-width="1.3"/><path d="M8 3.5 v8 M6 9.5 l2 2.5 l2-2.5" fill="none" stroke="#111" stroke-width="1.3"/></svg><div class="t" style="left:2328.8px;top:1523.4px;font-size:11.5px;color:#1f1f1f;font-weight:600;transform:scaleX(0.9890);transform-origin:0 0;">Type</div><svg style="left:2369.5px;top:1522px;" width="12" height="14" viewBox="0 0 12 14"><path d="M3.5 11 v-8.5 M1.5 4.5 l2-2.5 l2 2.5" fill="none" stroke="#111" stroke-width="1.3"/><path d="M8 3.5 v8 M6 9.5 l2 2.5 l2-2.5" fill="none" stroke="#111" stroke-width="1.3"/></svg><div class="t" style="left:2425.0px;top:1523.4px;font-size:11.5px;color:#1f1f1f;font-weight:600;transform:scaleX(0.9985);transform-origin:0 0;">Value</div><div class="t" style="left:2521.0px;top:1523.4px;font-size:11.5px;color:#1f1f1f;font-weight:600;transform:scaleX(1.0004);transform-origin:0 0;">Source</div><svg style="left:2574px;top:1522px;" width="12" height="14" viewBox="0 0 12 14"><path d="M3.5 11 v-8.5 M1.5 4.5 l2-2.5 l2 2.5" fill="none" stroke="#111" stroke-width="1.3"/><path d="M8 3.5 v8 M6 9.5 l2 2.5 l2-2.5" fill="none" stroke="#111" stroke-width="1.3"/></svg><div class="t" style="left:2617.5px;top:1523.4px;font-size:11.5px;color:#1f1f1f;font-weight:600;transform:scaleX(0.9982);transform-origin:0 0;">Destination</div><svg style="left:2694px;top:1522px;" width="12" height="14" viewBox="0 0 12 14"><path d="M3.5 11 v-8.5 M1.5 4.5 l2-2.5 l2 2.5" fill="none" stroke="#111" stroke-width="1.3"/><path d="M8 3.5 v8 M6 9.5 l2 2.5 l2-2.5" fill="none" stroke="#111" stroke-width="1.3"/></svg><div class="a" style="left:2225.0px;top:1545.5px;width:481.0px;height:1.0px;background:#bdbdbd"></div><div class="a" style="left:2724.0px;top:42.0px;width:827.0px;height:32.0px;background:#eeeeee"></div><svg style="left:2731.5px;top:48.8px;" width="16" height="16" viewBox="0 0 16 16"><g fill="none" stroke="#5b36d6" stroke-width="1.4"><circle cx="8" cy="8" r="6.3"/><ellipse cx="8" cy="8" rx="2.8" ry="6.3"/><path d="M1.8 5.8 h12.4 M1.8 10.2 h12.4"/></g></svg><div class="t" style="left:2755.9px;top:52.2px;font-size:11.5px;color:#5b36d6;font-weight:bold;transform:scaleX(0.9772);transform-origin:0 0;">Belief</div><div class="a" style="left:2724.0px;top:71.8px;width:71.0px;height:2.2px;background:#5b36d6"></div><svg style="left:2803px;top:50px;" width="16" height="14" viewBox="0 0 16 14"><path d="M1.5 2 q6.5 1.5 13 0 v10 q-6.5-1.5-13 0z" fill="none" stroke="#9a9a9a" stroke-width="1.3"/><path d="M4 9.5 l2.5-2.5 l1.5 1.5 l1.5-1.5 l2.5 2.5z" fill="#9a9a9a"/></svg><div class="t" style="left:2827.0px;top:52.6px;font-size:11.5px;color:#9a9a9a;font-weight:normal;transform:scaleX(1.0295);transform-origin:0 0;">Simulator</div><div class="a" style="left:2724.0px;top:74.0px;width:827.0px;height:1953.0px;background:#f9f9f9"></div><div class="a" style="left:3551.0px;top:42.0px;width:2.0px;height:1985.0px;background:#bdbdbd"></div><div class="a" style="left:2724px;top:74px;width:827px;height:1953px;overflow:hidden"><svg style="left:0;top:0" width="827" height="1953"><g transform="translate(-2724 -74)"><path d="M-246.1 1124.7L57190.7 -19384.0M-179.7 1119.1L67078.1 -23429.8M-114.2 1113.6L82066.7 -29563.0M-49.7 1108.2L107476.1 -39960.4M14.0 1102.8L159965.7 -61438.8M76.7 1097.5L332210.4 -131920.1M138.6 1092.3L-2287519.7 940055.1M199.6 1087.1L-243258.8 103557.9M259.8 1082.0L-124471.0 54950.7M319.2 1077.0L-81746.7 37468.2M377.8 1072.1L-59745.3 28465.4M435.5 1067.2L-46332.6 22977.0M492.5 1062.4L-37300.6 19281.2M548.8 1057.6L-30804.5 16623.1M604.3 1052.9L-25907.8 14619.4M659.1 1048.3L-22084.5 13054.9M713.1 1043.7L-19016.6 11799.5M766.5 1039.2L-16500.3 10769.9M819.2 1034.8L-14399.1 9910.1M871.2 1030.4L-12618.1 9181.3M922.6 1026.1L-11089.3 8555.7M973.3 1021.8L-9762.7 8012.9M1023.3 1017.5L-8600.6 7537.4M1072.8 1013.4L-7574.3 7117.4M1121.6 1009.2L-6661.3 6743.8M1169.9 1005.2L-5843.7 6409.3M1217.5 1001.1L-5107.4 6108.0M1264.6 997.2L-4440.8 5835.2M1311.1 993.2L-3834.4 5587.1M1357.0 989.4L-3280.5 5360.4M1402.4 985.5L-2772.6 5152.6M1447.3 981.7L-2305.0 4961.3M1491.6 978.0L-1873.3 4784.6M1535.4 974.3L-1473.4 4621.0M1578.7 970.6L-1101.9 4469.0M1621.5 967.0L-756.0 4327.4M1663.8 963.5L-433.0 4195.2M1705.7 959.9L-130.8 4071.6M1747.0 956.4L152.7 3955.6M1787.9 953.0L419.0 3846.6M1828.3 949.6L669.7 3744.0M1868.3 946.2L906.1 3647.3M1907.8 942.9L1129.4 3555.9M1946.9 939.6L1340.7 3469.5M1985.5 936.3L1540.9 3387.5M2023.8 933.1L1730.9 3309.8M2061.6 929.9L1911.4 3235.9M2099.0 926.7L2083.1 3165.7M2136.0 923.6L2246.7 3098.7M2172.6 920.5L2402.7 3034.9M2208.8 917.4L2551.6 2974.0M2244.7 914.4L2693.9 2915.7M2280.1 911.4L2830.1 2860.0M2315.2 908.5L2960.4 2806.7M2349.9 905.5L3085.4 2755.5M2384.3 902.6L3205.3 2706.5M2418.3 899.7L3320.3 2659.4M2452.0 896.9L3430.9 2614.2M2485.3 894.1L3537.2 2570.6M2518.2 891.3L3639.6 2528.8M2550.9 888.6L3738.1 2488.4M2583.2 885.8L3833.1 2449.6M2615.2 883.1L3924.7 2412.1M2646.8 880.4L4013.1 2375.9M2678.2 877.8L4098.4 2341.0M2709.2 875.2L4180.9 2307.3M2740.0 872.6L4260.6 2274.7M2770.4 870.0L4337.7 2243.1M2800.6 867.5L4412.3 2212.6M2830.4 864.9L4484.6 2183.0M2860.0 862.4L4554.6 2154.4M2889.3 860.0L4622.4 2126.6M2918.3 857.5L4688.2 2099.7M2947.0 855.1L4752.1 2073.5M2975.5 852.7L4814.0 2048.2M3003.7 850.3L4874.2 2023.6M3031.6 848.0L4932.7 1999.6M3059.2 845.6L4989.5 1976.4M3086.7 843.3L5044.7 1953.8M3113.8 841.0L5098.5 1931.8M3140.7 838.7L5150.7 1910.4M3167.4 836.5L5201.6 1889.6M3193.8 834.3L5251.2 1869.3M3220.0 832.0L5299.4 1849.6M3245.9 829.9L5346.5 1830.3M3271.6 827.7L5392.3 1811.6M3297.1 825.5L5437.0 1793.3M3322.4 823.4L5480.6 1775.4M3347.4 821.3L5523.1 1758.0M3372.2 819.2L5564.6 1741.1M3396.8 817.1L5605.1 1724.5M3421.2 815.1L5644.7 1708.3M3445.3 813.0L5683.4 1692.5M3469.3 811.0L5721.1 1677.0M3493.0 809.0L5758.0 1661.9M3516.6 807.0L5794.1 1647.1M3539.9 805.0L5829.4 1632.7M3563.1 803.1L5863.9 1618.6M3586.0 801.1L5897.7 1604.8M3608.8 799.2L5930.7 1591.3M3631.3 797.3L5963.0 1578.0M3653.7 795.4L5994.7 1565.1M3675.9 793.5L6025.6 1552.4M3697.9 791.7L6056.0 1540.0M3719.7 789.8L6085.7 1527.8M3741.4 788.0L6114.9 1515.9M3762.8 786.2L6143.4 1504.2M3784.1 784.4L6171.4 1492.8M3805.2 782.6L6198.8 1481.5M3826.2 780.9L6225.7 1470.5M3846.9 779.1L6252.1 1459.7M3867.5 777.4L6278.0 1449.1M3888.0 775.6L6303.4 1438.7M3908.3 773.9L6328.3 1428.5M3928.4 772.2L6352.8 1418.5M3948.3 770.5L6376.8 1408.7M3968.1 768.9L6400.4 1399.1M3987.8 767.2L6423.6 1389.6M4007.3 765.6L6446.3 1380.3M4026.6 763.9L6468.6 1371.1M4045.8 762.3L6490.6 1362.2M-246.1 1124.7L4045.8 762.3M-286.3 1139.1L4063.4 766.6M-327.9 1154.0L4081.4 771.0M-371.0 1169.3L4099.6 775.5M-415.6 1185.3L4118.2 780.1M-461.9 1201.8L4137.2 784.7M-509.8 1218.9L4156.5 789.5M-559.7 1236.7L4176.2 794.3M-611.4 1255.2L4196.3 799.2M-665.2 1274.4L4216.8 804.3M-721.2 1294.4L4237.6 809.4M-779.5 1315.2L4258.9 814.6M-840.2 1336.9L4280.6 819.9M-903.6 1359.5L4302.8 825.4M-969.7 1383.1L4325.4 830.9M-1038.8 1407.8L4348.5 836.6M-1111.1 1433.6L4372.1 842.4M-1186.8 1460.6L4396.1 848.3M-1266.2 1489.0L4420.7 854.3M-1349.5 1518.7L4445.8 860.5M-1437.0 1549.9L4471.5 866.8M-1529.0 1582.8L4497.7 873.2M-1626.0 1617.4L4524.5 879.8M-1728.2 1654.0L4552.0 886.5M-1836.3 1692.5L4580.0 893.4M-1950.6 1733.4L4608.7 900.4M-2071.8 1776.6L4638.1 907.6M-2200.4 1822.5L4668.2 915.0M-2337.2 1871.4L4699.0 922.6M-2482.9 1923.4L4730.6 930.3M-2638.6 1979.0L4762.9 938.3M-2805.2 2038.5L4796.0 946.4M-2984.0 2102.3L4830.0 954.7M-3176.2 2171.0L4864.9 963.3M-3383.5 2245.0L4900.6 972.0M-3607.8 2325.1L4937.3 981.0M-3851.3 2412.0L4974.9 990.3M-4116.3 2506.7L5013.6 999.8M-4406.1 2610.1L5053.3 1009.5M-4724.2 2723.7L5094.1 1019.5M-5075.0 2849.0L5136.1 1029.8M-5463.8 2987.8L5179.3 1040.4M-5897.2 3142.5L5223.7 1051.3M-6383.1 3316.1L5269.4 1062.5M-6931.9 3512.0L5316.5 1074.1M-7556.6 3735.1L5365.0 1086.0M-8274.1 3991.3L5414.9 1098.2M-9106.8 4288.6L5466.5 1110.9M-10084.7 4637.8L5519.6 1123.9M-11249.5 5053.7L5574.5 1137.4M-12660.5 5557.5L5631.2 1151.3M-14404.9 6180.4L5689.7 1165.7M-16616.7 6970.1L5750.2 1180.5M-19513.0 8004.3L5812.8 1195.9M-23469.4 9417.0L5877.6 1211.8M-29198.6 11462.7L5944.7 1228.2M-38236.0 14689.6L6014.2 1245.3M-54610.1 20536.2L6086.3 1263.0M-93358.7 34372.0L6161.1 1281.3M-299260.5 107892.5L6238.7 1300.4M262598.0 -92727.8L6319.4 1320.2M93046.1 -32186.7L6403.3 1340.7M57190.7 -19384.0L6490.6 1362.2" stroke="#c8c8c8" stroke-width="1" fill="none"/><line x1="-11249.5" y1="5053.7" x2="3012.2" y2="1733.8" stroke="#707070" stroke-width="1" /><line x1="3012.2" y1="1733.8" x2="5574.5" y2="1137.4" stroke="#f0a040" stroke-width="1.2" /><line x1="3012.2" y1="1733.8" x2="3537.2" y2="2570.6" stroke="#3a78e8" stroke-width="1.3" /><polygon points="2856.0,455.3 3344.0,445.4 3344.0,479.0 2856.0,489.0" fill="#d8dfe9" /><line x1="2856.0" y1="462.0" x2="3344.0" y2="452.0" stroke="#b9c2ce" stroke-width="1.2" /><line x1="2895.0" y1="482.0" x2="3308.0" y2="473.0" stroke="#b9c2ce" stroke-width="1" /><rect x="2856.4" y="455.0" width="38.8" height="124.0" fill="#e3e8ef" /><line x1="2866.0" y1="470.0" x2="2868.0" y2="579.0" stroke="#b9c2ce" stroke-width="1" /><line x1="2885.0" y1="470.0" x2="2887.0" y2="579.0" stroke="#b9c2ce" stroke-width="1" /><rect x="3308.0" y="445.0" width="36.0" height="114.0" fill="#d8dfe9" /><line x1="3318.0" y1="460.0" x2="3318.0" y2="559.0" stroke="#b9c2ce" stroke-width="1" /><line x1="3335.0" y1="460.0" x2="3335.0" y2="559.0" stroke="#b9c2ce" stroke-width="1" /><rect x="2856.0" y="452.0" width="39.0" height="5.0" fill="#8a8f96" /><rect x="3308.0" y="442.0" width="36.0" height="5.0" fill="#8a8f96" /><polygon points="2935.0,453.0 3010.0,450.0 3015.0,456.0 2940.0,458.0" fill="#eef0f4" /><polygon points="3166.0,1416.5 3175.7,1426.9 3188.9,537.7 3177.7,535.1" fill="#e2e7ee" stroke="#e2e7ee" stroke-width=".6"/><polygon points="3175.7,1426.9 3198.5,1422.6 3214.6,536.8 3188.9,537.7" fill="#d7dee8" stroke="#d7dee8" stroke-width=".6"/><polygon points="3177.7,535.1 3203.2,534.3 3214.6,536.8 3188.9,537.7" fill="#c3cbd7" stroke="#c3cbd7" stroke-width=".6"/><polygon points="2812.8,1477.8 2818.3,1487.0 2783.3,549.5 2777.4,547.2" fill="#e2e7ee" stroke="#e2e7ee" stroke-width=".6"/><polygon points="2818.3,1487.0 2838.8,1483.2 2806.8,548.8 2783.3,549.5" fill="#d7dee8" stroke="#d7dee8" stroke-width=".6"/><polygon points="2789.2,546.9 3191.9,535.0 3200.3,536.9 2794.9,549.1" fill="#c3cbd7" stroke="#c3cbd7" stroke-width=".6"/><polygon points="2795.7,571.6 3200.0,558.2 3200.3,536.9 2794.9,549.1" fill="#d7dee8" stroke="#d7dee8" stroke-width=".6"/><polygon points="2790.1,569.3 2795.7,571.6 2794.9,549.1 2789.2,546.9" fill="#e2e7ee" stroke="#e2e7ee" stroke-width=".6"/><polygon points="2777.4,547.2 2800.7,546.5 2806.8,548.8 2783.3,549.5" fill="#c3cbd7" stroke="#c3cbd7" stroke-width=".6"/><polygon points="3186.5,536.3 3205.7,535.7 3498.4,591.5 3476.1,592.5" fill="#c3cbd7" stroke="#c3cbd7" stroke-width=".6"/><polygon points="3186.2,557.5 3474.8,618.2 3476.1,592.5 3186.5,536.3" fill="#e2e7ee" stroke="#e2e7ee" stroke-width=".6"/><polygon points="3474.8,618.2 3497.0,617.1 3498.4,591.5 3476.1,592.5" fill="#d7dee8" stroke="#d7dee8" stroke-width=".6"/><polygon points="3241.0,574.0 3288.0,582.0 3268.0,1030.0 3226.0,1030.0" fill="#d8dfe9" /><line x1="3255.0" y1="582.0" x2="3240.0" y2="1030.0" stroke="#b9c2ce" stroke-width="1" /><line x1="3272.0" y1="584.0" x2="3256.0" y2="1030.0" stroke="#b9c2ce" stroke-width="1" /><polygon points="3082.0,1389.0 3175.0,1370.0 3225.0,1378.0 3225.0,1463.0 3082.0,1489.0" fill="#33363b" /><polygon points="3253.0,1252.5 3394.0,1240.0 3394.0,1620.0 3253.0,1480.0" fill="#4b5969" /><polygon points="3410.0,1246.0 3431.0,1240.0 3431.0,1640.0 3410.0,1650.0" fill="#2f3a46" /><ellipse cx="3218" cy="1534" rx="14" ry="20" fill="#c5ccd6"/><ellipse cx="3221" cy="1538" rx="7" ry="13" fill="#6d7885"/><ellipse cx="3345" cy="1684" rx="14" ry="20" fill="#c5ccd6"/><ellipse cx="3348" cy="1688" rx="7" ry="13" fill="#6d7885"/><polygon points="3206.0,1470.0 3219.0,1466.0 3392.0,1630.0 3380.0,1650.0" fill="#d8dfe9" /><line x1="3213.0" y1="1477.0" x2="3386.0" y2="1640.0" stroke="#b9c2ce" stroke-width="1.2" /><polygon points="3227.6,1270.0 3256.7,1266.0 3257.0,1470.0 3228.0,1475.0" fill="#aeb7c2" /><polygon points="3262.0,1054.0 3412.7,1137.5 3412.7,1169.0 3259.0,1074.0" fill="#d8dfe9" /><line x1="3265.0" y1="1061.0" x2="3412.0" y2="1146.0" stroke="#b9c2ce" stroke-width="1.5" /><line x1="3263.0" y1="1068.0" x2="3412.0" y2="1157.0" stroke="#b9c2ce" stroke-width="1" /><polygon points="2831.0,540.0 2874.0,545.0 2872.0,1460.0 2832.0,1470.0" fill="#d8dfe9" /><line x1="2844.0" y1="560.0" x2="2844.0" y2="1460.0" stroke="#b9c2ce" stroke-width="1" /><line x1="2860.0" y1="560.0" x2="2860.0" y2="1460.0" stroke="#b9c2ce" stroke-width="1" /><polygon points="2830.0,1442.0 2916.0,1416.0 2916.0,1527.0 2884.6,1530.5 2830.0,1456.0" fill="#33363b" /><polygon points="2839.0,1173.0 2916.0,1200.0 2916.0,1314.0 2839.0,1300.0" fill="#dfe2e7" /><polygon points="2844.0,1185.5 2872.0,1195.0 2872.0,1239.0 2844.0,1232.0" fill="#3c434c" /><polygon points="2909.0,1219.0 2990.0,1250.0 2990.0,1660.0 2915.0,1550.0" fill="#4b5969" /><polygon points="2812.0,1466.0 2828.0,1462.0 3000.0,1686.0 2990.0,1700.0" fill="#e3e8ef" /><line x1="2818.0" y1="1472.0" x2="2994.0" y2="1692.0" stroke="#b9c2ce" stroke-width="1.2" /><ellipse cx="2830" cy="1492" rx="16" ry="9" fill="#d5dbe3"/><rect x="2815" y="1470" width="30" height="20" fill="#dde3ea"/><polygon points="2898.7,1116.3 3244.4,1072.2 3403.0,1176.3 3057.5,1227.5 2969.0,1190.0" fill="#33363b" /><polygon points="3114.0,1130.0 3170.0,1118.0 3191.5,1142.0 3130.0,1150.0" fill="#f2f2f2" /><polygon points="3122.0,1130.0 3165.0,1121.0 3180.0,1139.0 3133.0,1146.0" fill="#151515" /><polygon points="3057.0,1192.0 3100.0,1185.0 3114.0,1222.0 3060.0,1225.0" fill="#f2f2f2" /><polygon points="3060.0,1197.0 3096.0,1191.0 3106.0,1218.0 3062.0,1220.0" fill="#151515" /><polygon points="2818.0,1080.0 2980.0,1198.0 2985.0,1297.0 2962.0,1295.0 2822.0,1165.0" fill="#e3e8ef" /><line x1="2822.0" y1="1110.0" x2="2980.0" y2="1230.0" stroke="#b9c2ce" stroke-width="1.5" /><line x1="2822.0" y1="1130.0" x2="2982.0" y2="1252.0" stroke="#b9c2ce" stroke-width="1.5" /><line x1="2822.0" y1="1148.0" x2="2982.0" y2="1272.0" stroke="#b9c2ce" stroke-width="1.2" /><polygon points="2797.0,1073.0 2830.0,1075.0 2845.0,1135.0 2800.0,1150.0" fill="#e9edf2" /><polygon points="2955.0,1200.0 2985.0,1205.0 2985.0,1297.0 2950.0,1290.0" fill="#e9edf2" /><polygon points="2833.0,1156.0 2871.0,1150.0 2871.0,1185.0 2833.0,1190.0" fill="#d8dfe9" /><polygon points="2841.0,1312.0 2912.0,1295.0 2912.0,1330.0 2841.0,1348.0" fill="#d8dfe9" /><line x1="2841.0" y1="1328.0" x2="2912.0" y2="1311.0" stroke="#b9c2ce" stroke-width="1" /><polygon points="2881.0,1058.0 3244.0,1050.0 3244.0,1072.0 2898.7,1116.3 2881.0,1075.0" fill="#d8dfe9" /><line x1="2885.0" y1="1068.0" x2="3240.0" y2="1060.0" stroke="#b9c2ce" stroke-width="1" /><polygon points="3411.2,1633.6 3425.5,1648.3 3481.1,594.6 3463.8,590.8" fill="#e2e7ee" stroke="#e2e7ee" stroke-width=".6"/><polygon points="3425.5,1648.3 3451.6,1642.2 3510.9,593.3 3481.1,594.6" fill="#d7dee8" stroke="#d7dee8" stroke-width=".6"/><polygon points="2781.1,548.4 2803.0,547.6 3004.1,614.4 2977.5,615.6" fill="#c3cbd7" stroke="#c3cbd7" stroke-width=".6"/><polygon points="2782.8,593.3 2978.2,671.4 2977.5,615.6 2781.1,548.4" fill="#e2e7ee" stroke="#e2e7ee" stroke-width=".6"/><polygon points="3463.8,590.8 3493.4,589.4 3510.9,593.3 3481.1,594.6" fill="#c3cbd7" stroke="#c3cbd7" stroke-width=".6"/><polygon points="2982.6,1735.7 2993.0,1752.8 2979.1,618.1 2967.1,613.6" fill="#e2e7ee" stroke="#e2e7ee" stroke-width=".6"/><polygon points="2993.0,1752.8 3023.3,1745.7 3014.7,616.5 2979.1,618.1" fill="#d7dee8" stroke="#d7dee8" stroke-width=".6"/><polygon points="2986.3,613.3 3480.8,590.6 3493.8,593.5 2995.4,616.7" fill="#c3cbd7" stroke="#c3cbd7" stroke-width=".6"/><polygon points="2995.8,650.4 3492.1,624.4 3493.8,593.5 2995.4,616.7" fill="#d7dee8" stroke="#d7dee8" stroke-width=".6"/><polygon points="2978.2,671.4 3004.6,670.0 3004.1,614.4 2977.5,615.6" fill="#d7dee8" stroke="#d7dee8" stroke-width=".6"/><polygon points="2986.7,646.7 2995.8,650.4 2995.4,616.7 2986.3,613.3" fill="#e2e7ee" stroke="#e2e7ee" stroke-width=".6"/><polygon points="2967.1,613.6 3002.4,612.0 3014.7,616.5 2979.1,618.1" fill="#c3cbd7" stroke="#c3cbd7" stroke-width=".6"/><polygon points="2995.0,609.0 3500.0,588.0 3480.0,631.0 3012.0,654.0" fill="#d8dfe9" /><line x1="3012.0" y1="640.0" x2="3478.0" y2="620.0" stroke="#b9c2ce" stroke-width="1" /><polygon points="2822.0,578.0 2850.0,585.0 2850.0,620.0 2832.0,660.0" fill="#e9edf2" /><polygon points="2936.0,630.0 2962.0,640.0 2962.0,715.0 2950.0,710.0" fill="#e9edf2" /><line x1="2790.0" y1="567.0" x2="2958.0" y2="622.0" stroke="#b9c2ce" stroke-width="1.3" /><line x1="2790.0" y1="575.0" x2="2958.0" y2="642.0" stroke="#b9c2ce" stroke-width="1.3" /><polygon points="2967.1,613.6 3002.4,612.0 3014.7,616.5 2979.1,618.1" fill="#8d9299" /><polygon points="3463.8,590.8 3493.4,589.4 3510.9,593.3 3481.1,594.6" fill="#8d9299" /><polygon points="2773.8,547.0 2802.8,546.1 2810.5,549.0 2781.2,549.9" fill="#8d9299" /><polygon points="3177.7,535.1 3203.2,534.3 3214.6,536.8 3188.9,537.7" fill="#8d9299" /><line x1="2989.8" y1="617.6" x2="3002.1" y2="1750.6" stroke="#b9c2ce" stroke-width="1" /><line x1="3004.1" y1="617.0" x2="3014.3" y2="1747.8" stroke="#b9c2ce" stroke-width="1" /><line x1="3490.0" y1="594.2" x2="3433.4" y2="1646.5" stroke="#b9c2ce" stroke-width="1" /><line x1="3502.0" y1="593.7" x2="3443.8" y2="1644.0" stroke="#b9c2ce" stroke-width="1" /><polygon points="3015.0,653.0 3474.0,629.0 3474.0,667.0 3050.0,688.0" fill="#d8dfe9" /><line x1="3050.0" y1="670.0" x2="3445.0" y2="650.0" stroke="#b9c2ce" stroke-width="1.2" /><polygon points="3015.0,653.0 3050.0,655.0 3057.0,1230.0 3022.0,1233.0" fill="#e3e8ef" /><line x1="3033.0" y1="670.0" x2="3040.0" y2="1230.0" stroke="#b9c2ce" stroke-width="1" /><polygon points="3424.0,640.0 3472.0,630.0 3452.0,1212.0 3412.7,1211.5" fill="#d8dfe9" /><line x1="3440.0" y1="660.0" x2="3430.0" y2="1210.0" stroke="#b9c2ce" stroke-width="1" /><rect x="3014.0" y="650.0" width="37.0" height="5.0" fill="#8d9299" /><rect x="3447" y="691.6" width="55" height="42.39999999999998" fill="#a6adb7" rx="2"/><rect x="3471.5" y="691.6" width="6" height="42.39999999999998" fill="#8d949e"/><circle cx="3460.8" cy="704.3" r="3.6" fill="#eef0f3"/><circle cx="3460.8" cy="722.1" r="3.6" fill="#eef0f3"/><circle cx="3488.2" cy="704.3" r="3.6" fill="#eef0f3"/><circle cx="3488.2" cy="722.1" r="3.6" fill="#eef0f3"/><rect x="3430" y="1119" width="53" height="42" fill="#a6adb7" rx="2"/><rect x="3453.5" y="1119" width="6" height="42" fill="#8d949e"/><circle cx="3443.2" cy="1131.6" r="3.6" fill="#eef0f3"/><circle cx="3443.2" cy="1149.2" r="3.6" fill="#eef0f3"/><circle cx="3469.8" cy="1131.6" r="3.6" fill="#eef0f3"/><circle cx="3469.8" cy="1149.2" r="3.6" fill="#eef0f3"/><polygon points="3022.0,1232.0 3453.0,1169.5 3453.0,1210.5 3022.0,1273.0" fill="#d8dfe9" /><line x1="3022.0" y1="1249.0" x2="3453.0" y2="1186.5" stroke="#b9c2ce" stroke-width="1.2" /><polygon points="3024.0,1274.0 3428.0,1217.4 3428.0,1251.4 3024.0,1308.0" fill="#e3e8ef" /><line x1="3024.0" y1="1289.0" x2="3428.0" y2="1232.4" stroke="#b9c2ce" stroke-width="1.2" /><polygon points="3024.0,1307.0 3050.0,1305.0 3050.0,1724.5 3024.0,1730.0" fill="#4a5566" /><polygon points="3050.0,1300.0 3084.0,1298.0 3084.0,1721.0 3050.0,1724.0" fill="#e3e8ef" /><line x1="3068.0" y1="1310.0" x2="3068.0" y2="1718.0" stroke="#b9c2ce" stroke-width="1" /><line x1="3076.0" y1="1310.0" x2="3076.0" y2="1718.0" stroke="#aab3bf" stroke-width="1.5" /><polygon points="3385.5,1280.0 3419.0,1278.0 3419.0,1657.5 3385.5,1650.0" fill="#d8dfe9" /><line x1="3400.0" y1="1290.0" x2="3400.0" y2="1650.0" stroke="#b9c2ce" stroke-width="1" /><polygon points="3084.0,1705.0 3410.0,1648.0 3410.0,1669.0 3084.0,1726.0" fill="#d8dfe9" /><line x1="3084.0" y1="1714.0" x2="3410.0" y2="1657.0" stroke="#b9c2ce" stroke-width="1.2" /><ellipse cx="3438" cy="1680" rx="24" ry="12" fill="#ced5de"/><rect x="3414" y="1650" width="49" height="30" fill="#dde3ea"/><ellipse cx="3438" cy="1652" rx="24" ry="9" fill="#e6eaef"/><ellipse cx="3012" cy="1800" rx="23" ry="8" fill="#d6dbe2"/><polygon points="2920.0,1716.0 3093.0,1722.0 3105.0,1738.0 2956.0,1772.0" fill="#e4e6ea" /><polygon points="2956.0,1772.0 3105.0,1738.0 3105.0,1768.0 2958.0,1803.0" fill="#dde1e7" /><polygon points="2920.0,1716.0 2956.0,1772.0 2958.0,1803.0 2921.0,1728.0" fill="#e9ebef" /><polygon points="2931.0,1722.0 3081.0,1724.0 3089.0,1740.0 2957.6,1769.5" fill="#767676" /><polygon points="2933.0,1723.0 2943.6,1723.1 2946.2,1727.7 2935.7,1727.8" fill="#0a0a0a" /><polygon points="2940.6,1736.4 2950.8,1735.9 2953.4,1740.5 2943.3,1741.3" fill="#0a0a0a" /><polygon points="2948.1,1749.9 2958.0,1748.7 2960.6,1753.4 2950.8,1754.8" fill="#0a0a0a" /><polygon points="2955.7,1763.4 2965.1,1761.6 2967.7,1766.2 2958.4,1768.3" fill="#0a0a0a" /><polygon points="2950.2,1729.4 2960.6,1729.2 2963.0,1733.5 2952.7,1734.0" fill="#0a0a0a" /><polygon points="2957.2,1742.1 2967.3,1741.2 2969.7,1745.6 2959.8,1746.6" fill="#0a0a0a" /><polygon points="2964.3,1754.7 2974.0,1753.2 2976.4,1757.6 2966.8,1759.3" fill="#0a0a0a" /><polygon points="2960.2,1723.2 2970.8,1723.3 2973.1,1727.3 2962.6,1727.5" fill="#0a0a0a" /><polygon points="2966.8,1735.1 2977.0,1734.5 2979.3,1738.6 2969.2,1739.3" fill="#0a0a0a" /><polygon points="2973.4,1746.9 2983.3,1745.7 2985.5,1749.8 2975.8,1751.2" fill="#0a0a0a" /><polygon points="2980.0,1758.7 2989.5,1756.9 2991.7,1761.0 2982.3,1763.0" fill="#0a0a0a" /><polygon points="2976.9,1728.9 2987.3,1728.6 2989.4,1732.4 2979.1,1732.8" fill="#0a0a0a" /><polygon points="2983.0,1739.9 2993.0,1739.0 2995.1,1742.8 2985.2,1743.8" fill="#0a0a0a" /><polygon points="2989.1,1750.9 2998.7,1749.4 3000.8,1753.1 2991.3,1754.9" fill="#0a0a0a" /><polygon points="2987.4,1723.5 2998.0,1723.6 2999.9,1727.0 2989.5,1727.1" fill="#0a0a0a" /><polygon points="2993.1,1733.7 3003.3,1733.1 3005.2,1736.6 2995.1,1737.3" fill="#0a0a0a" /><polygon points="2998.7,1743.9 3008.5,1742.7 3010.4,1746.1 3000.7,1747.6" fill="#0a0a0a" /><polygon points="3004.3,1754.1 3013.8,1752.3 3015.6,1755.7 3006.3,1757.8" fill="#0a0a0a" /><polygon points="3003.6,1728.3 3014.0,1728.1 3015.7,1731.2 3005.5,1731.7" fill="#0a0a0a" /><polygon points="3008.7,1737.7 3018.8,1736.8 3020.5,1740.0 3010.6,1741.1" fill="#0a0a0a" /><polygon points="3013.9,1747.1 3023.5,1745.6 3025.2,1748.7 3015.7,1750.4" fill="#0a0a0a" /><polygon points="3014.6,1723.7 3025.3,1723.8 3026.8,1726.7 3016.3,1726.8" fill="#0a0a0a" /><polygon points="3019.3,1732.3 3029.5,1731.7 3031.1,1734.6 3021.0,1735.4" fill="#0a0a0a" /><polygon points="3023.9,1740.9 3033.8,1739.7 3035.3,1742.5 3025.6,1743.9" fill="#0a0a0a" /><polygon points="3028.6,1749.4 3038.1,1747.6 3039.6,1750.5 3030.3,1752.5" fill="#0a0a0a" /><polygon points="3030.3,1727.7 3040.8,1727.5 3042.1,1730.1 3031.8,1730.5" fill="#0a0a0a" /><polygon points="3034.5,1735.5 3044.5,1734.6 3045.9,1737.2 3036.0,1738.3" fill="#0a0a0a" /><polygon points="3038.7,1743.2 3048.3,1741.7 3049.7,1744.3 3040.2,1746.0" fill="#0a0a0a" /><polygon points="3041.8,1724.0 3052.5,1724.1 3053.6,1726.3 3043.2,1726.5" fill="#0a0a0a" /><polygon points="3045.5,1730.9 3055.8,1730.4 3057.0,1732.6 3046.9,1733.4" fill="#0a0a0a" /><polygon points="3049.2,1737.8 3059.1,1736.7 3060.3,1738.9 3050.5,1740.3" fill="#0a0a0a" /><polygon points="3052.9,1744.8 3062.4,1743.0 3063.6,1745.2 3054.2,1747.3" fill="#0a0a0a" /><polygon points="3057.1,1727.1 3067.5,1726.9 3068.5,1728.9 3058.2,1729.3" fill="#0a0a0a" /><polygon points="3060.2,1733.3 3070.3,1732.4 3071.3,1734.4 3061.4,1735.5" fill="#0a0a0a" /><polygon points="3063.4,1739.4 3073.1,1737.9 3074.1,1739.9 3064.6,1741.6" fill="#0a0a0a" /><polygon points="3069.1,1724.2 3079.7,1724.3 3080.5,1726.0 3070.0,1726.1" fill="#0a0a0a" /><polygon points="3071.8,1729.5 3082.0,1729.0 3082.8,1730.6 3072.7,1731.4" fill="#0a0a0a" /><polygon points="3074.5,1734.8 3084.3,1733.6 3085.2,1735.3 3075.5,1736.7" fill="#0a0a0a" /><polygon points="3077.2,1740.1 3086.7,1738.3 3087.5,1740.0 3078.2,1742.0" fill="#0a0a0a" /><polygon points="2987.0,1340.0 3024.0,1338.0 3026.0,1740.0 2994.0,1745.0" fill="#e3e8ef" /><line x1="3005.0" y1="1345.0" x2="3008.0" y2="1740.0" stroke="#b9c2ce" stroke-width="1" /><ellipse cx="3010" cy="1742" rx="22" ry="9" fill="#e2e6eb"/><polygon points="2907.5,580.0 2935.0,577.0 2939.0,593.0 2908.0,588.0" fill="#1f36d8" /><polygon points="2965.7,585.0 2985.0,580.5 3001.0,597.0 2990.0,607.0 2968.0,600.0" fill="#1f36d8" /><line x1="2937.5" y1="584.0" x2="2969.0" y2="589.3" stroke="#4ab0e8" stroke-width="4" /><line x1="2987.0" y1="600.0" x2="3047.0" y2="594.6" stroke="#4ab0e8" stroke-width="4" /><polygon points="3262.0,570.0 3290.0,560.0 3311.0,565.0 3305.0,590.0 3270.0,595.0" fill="#1f36d8" /><line x1="3258.0" y1="600.0" x2="3300.0" y2="585.0" stroke="#4ab0e8" stroke-width="3" /><line x1="3300.0" y1="585.0" x2="3311.0" y2="560.0" stroke="#4ab0e8" stroke-width="3" /><rect x="3077.0" y="469.0" width="28.0" height="28.6" fill="#b9c1cb" /><rect x="3080.0" y="471.0" width="24.0" height="24.0" fill="#f2f4f7" /><rect x="3080.0" y="497.0" width="21.5" height="11.0" fill="#dde3ea" /><rect x="3093.0" y="476.0" width="4.0" height="5.0" fill="#444" /><rect x="3154.5" y="455.0" width="28.2" height="47.0" fill="#e5e09a" /><rect x="3159.0" y="447.0" width="17.0" height="11.0" fill="#2a2f38" /><rect x="3154.5" y="455.0" width="28.2" height="11.0" fill="#2f343c" /><rect x="3154.5" y="494.0" width="28.2" height="12.4" fill="#2a2f38" /><line x1="3154.5" y1="470.0" x2="3154.5" y2="500.0" stroke="#c8c27a" stroke-width="1.5" /><polygon points="3425.0,862.0 3420.0,915.0 3395.0,912.0 3387.0,893.0" fill="#10141a" /><g transform="translate(2980 760) scale(0.24975)"><path d="M788 690 h265 v25 h-265z" fill="#e5def7"/><ellipse cx="945" cy="692" rx="155" ry="30" fill="#ebe6f9" stroke="#cbc1ee" stroke-width="5"/><ellipse cx="935" cy="790" rx="130" ry="30" fill="#eee9fa" stroke="#d3cbf0" stroke-width="5"/><path d="M815 800 h240 v60 h-240z" fill="#f1edfb"/><path d="M820 860 L1040 860 L1030 960 Q1005 1000 1040 1060 L1040 1100 L830 1100 L830 1060 Q860 1000 830 960 Z" fill="#8a57e2"/><text x="905" y="900" font-size="26" fill="#fff" font-weight="bold" font-family="Liberation Sans">ROBOTIQ</text><path d="M825 1100 h210 v60 h-210z" fill="#ded6f5"/><path d="M835 1130 h45 v110 h-45z M985 1130 h45 v100 h-45z" fill="#e2dbf6"/><path d="M190 590 L300 610 L340 700 L340 1160 L200 1160 Z" fill="#8e99a5" fill-opacity=".9"/><path d="M300 245 C300 180 360 140 470 128 L600 112 L700 120 Q735 130 745 225 L840 232 Q1010 228 1022 262 L1025 620 Q1020 650 990 652 L860 652 Q838 650 835 620 L838 432 L668 432 L665 680 Q700 720 745 790 Q760 900 730 935 Q660 965 600 968 L400 990 L400 1180 Q440 1250 440 1290 Q400 1322 330 1320 L160 1310 Q115 1300 118 1240 L120 1150 Q160 1000 160 960 L165 800 Q180 720 220 712 L380 715 Q410 745 440 742 Q480 730 490 690 L490 445 Q440 360 390 350 Q300 320 300 245 Z" fill="#9f8cdb" fill-opacity=".9"/><g fill="#b9aee6" fill-opacity=".75"><ellipse cx="420" cy="270" rx="110" ry="95"/><ellipse cx="930" cy="300" rx="85" ry="60"/><ellipse cx="600" cy="840" rx="120" ry="110"/><path d="M560 440 h80 v260 h-80z"/></g><g fill="#8d78d4" fill-opacity=".6"><path d="M480 140 L600 118 L700 125 L740 225 L640 255 L520 250z"/><path d="M660 260 L840 240 L850 420 L700 420z"/><path d="M840 530 h180 v100 h-180z"/></g><path d="M170 890 h80 v230 h-80z" fill="#d06a7a" fill-opacity=".55"/><path d="M380 935 h200 v205 h-200z" fill="#9fc090" fill-opacity=".45"/><path d="M300 245 C300 180 360 140 470 128 L600 112 L700 120 Q735 130 745 225 L840 232 Q1010 228 1022 262 L1025 620 Q1020 650 990 652 L860 652 Q838 650 835 620 L838 432 L668 432 L665 680 Q700 720 745 790 Q760 900 730 935 Q660 965 600 968 L400 990 L400 1180 Q440 1250 440 1290 Q400 1322 330 1320 L160 1310 Q115 1300 118 1240 L120 1150 Q160 1000 160 960 L165 800 Q180 720 220 712 L380 715 Q410 745 440 742 Q480 730 490 690 L490 445 Q440 360 390 350 Q300 320 300 245 Z" fill="none" stroke="#5a30d8" stroke-width="13" stroke-linejoin="round"/><g stroke="#5a30d8" stroke-width="11" fill="none"><path d="M460 135 Q500 180 490 230"/><path d="M680 258 Q705 330 715 410"/><path d="M845 520 H1022"/><path d="M468 722 H690"/><path d="M440 760 Q480 840 470 930"/></g></g><line x1="3050.0" y1="1075.0" x2="3050.0" y2="880.0" stroke="#3a78d8" stroke-width="3" /><polygon points="3036.0,905.0 3064.0,905.0 3050.0,872.0" fill="#3a78d8" /><line x1="3052.0" y1="1075.0" x2="3243.0" y2="1053.0" stroke="#e03848" stroke-width="3" /><polygon points="3207.0,1043.0 3243.0,1053.0 3210.0,1068.0" fill="#e03848" /><line x1="3050.0" y1="1072.0" x2="2995.0" y2="1030.0" stroke="#2a8a2a" stroke-width="3" /><circle cx="2995" cy="1030" r="12" fill="#2a8a2a"/><polygon points="3057.0,1077.0 3100.0,1070.0 3112.0,1090.0 3113.0,1160.0 3095.0,1176.0 3057.0,1176.0" fill="#2234d8" /><polygon points="2954.5,1055.0 2967.0,1053.0 2967.0,1147.0 2958.0,1140.0" fill="#2234d8" /><circle cx="3118" cy="1128.6" r="13" fill="#2a8a2a"/><line x1="3107.0" y1="1119.0" x2="3165.0" y2="1107.0" stroke="#2a8a2a" stroke-width="2.5" /><line x1="3107.0" y1="1150.0" x2="3166.0" y2="1140.0" stroke="#2a8a2a" stroke-width="2.5" /><line x1="3165.0" y1="1107.0" x2="3165.0" y2="1140.0" stroke="#3a78d8" stroke-width="2.5" /><line x1="3165.0" y1="1107.0" x2="3180.0" y2="1118.0" stroke="#e03848" stroke-width="2" /><line x1="3165.0" y1="1140.0" x2="3180.0" y2="1153.0" stroke="#e03848" stroke-width="2" /><polygon points="3133.0,1150.0 3175.0,1147.0 3175.0,1173.0 3133.0,1175.0" fill="#d8dce2" /><line x1="3210.0" y1="1068.0" x2="3210.0" y2="1100.0" stroke="#3a78d8" stroke-width="2.5" /><rect x="2966.4" y="1091" width="35" height="23.8" rx="4" fill="#1e1e1e"/><text x="2973.5" y="1107" font-size="11.5" fill="#fff" font-weight="bold" font-family="Liberation Sans">box</text><polygon points="2849.8,1101.0 2886.0,1083.6 2888.4,1111.0" fill="#e03848" /><polygon points="3040.8,1234.0 3066.5,1234.0 3055.0,1258.0" fill="#3a78d8" /><g><circle cx="3170" cy="1978" r="28" fill="#fff" opacity=".9"/><line x1="3169" y1="1976" x2="3169" y2="1955" stroke="#3a78d8" stroke-width="1.5"/><line x1="3169" y1="1976" x2="3188" y2="1973" stroke="#e03848" stroke-width="1.5"/><line x1="3169" y1="1976" x2="3161" y2="1970" stroke="#2a8a2a" stroke-width="1.5"/><line x1="3169" y1="1976" x2="3169" y2="1995" stroke="#999" stroke-width="1.5"/><line x1="3169" y1="1976" x2="3152" y2="1980" stroke="#999" stroke-width="1.5"/><line x1="3169" y1="1976" x2="3177" y2="1981" stroke="#999" stroke-width="1.5"/><circle cx="3169" cy="1955" r="5.5" fill="#3a78d8"/><circle cx="3189" cy="1973" r="5.5" fill="#e03848"/><circle cx="3161" cy="1969" r="5.5" fill="#2a8a2a"/><circle cx="3169" cy="1996" r="4.5" fill="#999"/><circle cx="3152" cy="1980" r="4" fill="#999"/><circle cx="3178" cy="1981" r="4" fill="#999"/></g></g></svg></div><div class="a" style="left:3031.4px;top:82.3px;width:211.8px;height:25.3px;background:#fff;border:1px solid #c4c4c4;border-radius:2px"></div><div class="a" style="left:3072.2px;top:83.3px;width:32.3px;height:23.3px;background:#e3dcf7"></div><div class="a" style="left:3072.2px;top:83.3px;width:1.0px;height:23.3px;background:#cfcfcf"></div><div class="a" style="left:3104.5px;top:83.3px;width:1.0px;height:23.3px;background:#cfcfcf"></div><div class="a" style="left:3137.0px;top:83.3px;width:1.0px;height:23.3px;background:#cfcfcf"></div><div class="a" style="left:3202.5px;top:83.3px;width:1.0px;height:23.3px;background:#cfcfcf"></div><svg style="left:0;top:0" width="3300" height="120"><path d="M3042 89.5 v11 M3036.5 95 h11" stroke="#222" stroke-width="1.6"/><path d="M3058.5 93.5 h7 l-3.5 3.5z" fill="#222"/><g fill="#5b36d6"><path d="M3088.5 88 l-3 3 h6z M3088.5 102 l-3-3 h6z M3081.5 95 l3-3 v6z M3095.5 95 l-3-3 v6z"/></g><path d="M3088.5 90 v10 M3083.5 95 h10" stroke="#5b36d6" stroke-width="1.4"/><path d="M3114 96.5 q-1.5-4 6.5-4 q7 0 6.5 3.5 q-.5 2-4 2.5" fill="none" stroke="#222" stroke-width="1.5"/><path d="M3119 96.5 l-2.5 2 l2.5 2" fill="none" stroke="#222" stroke-width="1.3"/><path d="M3153.5 90 v6 l-5.5 4 M3153.5 96 l5.5 4" fill="none" stroke="#222" stroke-width="1.5"/><circle cx="3186" cy="94.5" r="5.2" fill="none" stroke="#222" stroke-width="1.5"/><circle cx="3186" cy="94.5" r="1.6" fill="none" stroke="#222" stroke-width="1.2"/><path d="M3180.8 95 v5" stroke="#222" stroke-width="1.5"/><circle cx="3211" cy="94" r="4.2" fill="none" stroke="#222" stroke-width="1.5"/><path d="M3214 97 l3.5 3.5" stroke="#222" stroke-width="1.6"/><path d="M3229.5 93.5 h7 l-3.5 3.5z" fill="#222"/></svg><div class="a" style="left:3553.0px;top:42.0px;width:286.0px;height:32.0px;background:#eeeeee"></div><svg style="left:3562px;top:49px;" width="16" height="16" viewBox="0 0 16 16"><g fill="none" stroke="#5b36d6" stroke-width="1.4"><circle cx="8" cy="8" r="6.3"/><ellipse cx="8" cy="8" rx="2.8" ry="6.3"/><path d="M1.8 5.8 h12.4 M1.8 10.2 h12.4"/></g></svg><div class="t" style="left:3585.6px;top:52.2px;font-size:11.5px;color:#5b36d6;font-weight:bold;transform:scaleX(1.0006);transform-origin:0 0;">Scene</div><div class="a" style="left:3553.0px;top:71.8px;width:75.0px;height:2.2px;background:#5b36d6"></div><svg style="left:3636px;top:50px;" width="16" height="14" viewBox="0 0 16 14"><path d="M2 5 q0-3 3-3 q3 0 3 3 q0 2-3 3.5 q-3 1.5-1 4.5 h4" fill="none" stroke="#222" stroke-width="1.5"/><circle cx="11" cy="9.5" r="2.5" fill="#222"/><path d="M13.5 8 h2 M13.5 11 h2" stroke="#222" stroke-width="1.2"/></svg><div class="t" style="left:3660.0px;top:52.6px;font-size:11.5px;color:#1f1f1f;font-weight:normal;transform:scaleX(1.0205);transform-origin:0 0;">Services</div><svg style="left:3814px;top:54px;" width="12" height="8" viewBox="0 0 12 8"><path d="M1.5 1.5 l4.5 4.5 l4.5-4.5" fill="none" stroke="#2a2a2a" stroke-width="1.6"/></svg><div class="a" style="left:3553.0px;top:74.0px;width:286.0px;height:1953.0px;background:#fff"></div><div class="a" style="left:3561.3px;top:82.3px;width:270.4px;height:23.2px;background:#fff;border:1px solid #c8c8c8;border-radius:2px"></div><svg style="left:3570px;top:87px;" width="14" height="14" viewBox="0 0 14 14"><circle cx="5.8" cy="5.8" r="3.8" fill="none" stroke="#222" stroke-width="1.6"/><path d="M8.5 8.5 l3.5 3.5" stroke="#222" stroke-width="1.8"/></svg><div class="t" style="left:3594.4px;top:88.7px;font-size:11.5px;color:#9a9a9a;font-weight:normal;transform:scaleX(1.1006);transform-origin:0 0;">Search</div><svg style="left:3809px;top:88px;" width="12" height="12" viewBox="0 0 12 12"><path d="M1.5 1.5 l9 9 M10.5 1.5 l-9 9" stroke="#222" stroke-width="1.5"/></svg><div class="a" style="left:3554.0px;top:434.0px;width:285.0px;height:32.0px;background:#e3dcf7"></div><div class="t" style="left:3625.7px;top:125.1px;font-size:11.5px;color:#1f1f1f;font-weight:normal;transform:scaleX(1.0300);transform-origin:0 0;">bluebird_caw:default_caw_resourc...</div><div class="t" style="left:3649.7px;top:157.1px;font-size:11.5px;color:#1f1f1f;font-weight:normal;transform:scaleX(1.0300);transform-origin:0 0;">adaptor_plate</div><div class="t" style="left:3649.7px;top:189.1px;font-size:11.5px;color:#1f1f1f;font-weight:normal;transform:scaleX(1.0300);transform-origin:0 0;">box</div><div class="t" style="left:3649.7px;top:221.1px;font-size:11.5px;color:#1f1f1f;font-weight:normal;transform:scaleX(1.0300);transform-origin:0 0;">calibration_marker</div><div class="t" style="left:3649.7px;top:253.1px;font-size:11.5px;color:#1f1f1f;font-weight:normal;transform:scaleX(1.0300);transform-origin:0 0;">connector</div><div class="t" style="left:3673.7px;top:285.1px;font-size:11.5px;color:#1f1f1f;font-weight:normal;transform:scaleX(1.0300);transform-origin:0 0;">grasp</div><div class="t" style="left:3673.7px;top:317.1px;font-size:11.5px;color:#1f1f1f;font-weight:normal;transform:scaleX(1.0300);transform-origin:0 0;">pregrasp</div><div class="t" style="left:3649.7px;top:349.1px;font-size:11.5px;color:#1f1f1f;font-weight:normal;transform:scaleX(1.0300);transform-origin:0 0;">enclosure</div><div class="t" style="left:3649.7px;top:381.1px;font-size:11.5px;color:#1f1f1f;font-weight:normal;transform:scaleX(1.0300);transform-origin:0 0;">my_camera</div><div class="t" style="left:3649.7px;top:413.1px;font-size:11.5px;color:#1f1f1f;font-weight:normal;transform:scaleX(1.0300);transform-origin:0 0;">spawner</div><div class="t" style="left:3649.7px;top:445.1px;font-size:11.5px;color:#5b36d6;font-weight:normal;transform:scaleX(1.0300);transform-origin:0 0;">ur3e_robot</div><div class="t" style="left:3673.7px;top:477.1px;font-size:11.5px;color:#1f1f1f;font-weight:normal;transform:scaleX(1.0300);transform-origin:0 0;">ur3e_flange_to_ati_axia80...</div><div class="t" style="left:3697.7px;top:509.1px;font-size:11.5px;color:#1f1f1f;font-weight:normal;transform:scaleX(1.0300);transform-origin:0 0;">ati_ft_sensor</div><div class="t" style="left:3721.7px;top:541.1px;font-size:11.5px;color:#1f1f1f;font-weight:normal;transform:scaleX(1.0300);transform-origin:0 0;">ati_axia80_m20_...</div><div class="t" style="left:3745.7px;top:573.1px;font-size:11.5px;color:#1f1f1f;font-weight:normal;transform:scaleX(1.0300);transform-origin:0 0;">gripper</div><div class="t" style="left:3769.7px;top:605.1px;font-size:11.5px;color:#1f1f1f;font-weight:normal;transform:scaleX(1.0300);transform-origin:0 0;">tool_fra...</div><div class="t" style="left:3721.7px;top:637.1px;font-size:11.5px;color:#1f1f1f;font-weight:normal;transform:scaleX(1.0300);transform-origin:0 0;">sensor</div><div class="t" style="left:3721.7px;top:669.1px;font-size:11.5px;color:#1f1f1f;font-weight:normal;transform:scaleX(1.0300);transform-origin:0 0;">tool_attach</div><div class="t" style="left:3673.7px;top:701.1px;font-size:11.5px;color:#1f1f1f;font-weight:normal;transform:scaleX(1.0300);transform-origin:0 0;">flange</div><div class="t" style="left:3673.7px;top:733.1px;font-size:11.5px;color:#1f1f1f;font-weight:normal;transform:scaleX(1.0300);transform-origin:0 0;">sensor</div><div class="t" style="left:3649.7px;top:765.1px;font-size:11.5px;color:#1f1f1f;font-weight:normal;transform:scaleX(1.0300);transform-origin:0 0;">validation_marker1</div><div class="t" style="left:3649.7px;top:797.1px;font-size:11.5px;color:#1f1f1f;font-weight:normal;transform:scaleX(1.0300);transform-origin:0 0;">validation_marker2</div><div class="t" style="left:3649.7px;top:829.1px;font-size:11.5px;color:#1f1f1f;font-weight:normal;transform:scaleX(1.0300);transform-origin:0 0;">grasp</div><div class="t" style="left:3649.7px;top:861.1px;font-size:11.5px;color:#1f1f1f;font-weight:normal;transform:scaleX(1.0300);transform-origin:0 0;">pregrasp</div><svg style="left:0;top:0" width="3839" height="900"><path d="M3582.3 128.4 h6.4 l-3.2 3.2z" fill="#2a2a2a"/><g transform="translate(3603.5 123.5)"><path d="M1.5 5.5 h9 v5 h-9z M3 3.5 h6 M4 1.8 h4 M1.5 8 h9" fill="none" stroke="#2a2a2a" stroke-width="1.2"/></g><g transform="translate(3627.5 155.5)"><g fill="none" stroke="#2a2a2a" stroke-width="1.2" stroke-linejoin="round"><path d="M6 1.5 l4.5 2.4 v5.2 l-4.5 2.4 l-4.5-2.4 v-5.2z M1.5 3.9 l4.5 2.4 l4.5-2.4 M6 6.3 v5.2"/></g></g><path d="M3607.9 190.8 v6.4 l3.2-3.2z" fill="#2a2a2a"/><g transform="translate(3627.5 187.5)"><g fill="none" stroke="#2a2a2a" stroke-width="1.2" stroke-linejoin="round"><path d="M6 1.5 l4.5 2.4 v5.2 l-4.5 2.4 l-4.5-2.4 v-5.2z M1.5 3.9 l4.5 2.4 l4.5-2.4 M6 6.3 v5.2"/></g></g><g transform="translate(3627.5 219.5)"><g fill="none" stroke="#2a2a2a" stroke-width="1.2" stroke-linejoin="round"><path d="M6 1.5 l4.5 2.4 v5.2 l-4.5 2.4 l-4.5-2.4 v-5.2z M1.5 3.9 l4.5 2.4 l4.5-2.4 M6 6.3 v5.2"/></g></g><path d="M3606.3 256.4 h6.4 l-3.2 3.2z" fill="#2a2a2a"/><g transform="translate(3627.5 251.5)"><g fill="none" stroke="#2a2a2a" stroke-width="1.2"><path d="M6 1.5 l4.5 2.4 v5.2 l-4.5 2.4 l-4.5-2.4 v-5.2z M1.5 3.9 l4.5 2.4 l4.5-2.4 M6 6.3 v5.2"/></g><path d="M3 3 l3 1.5 l3-1.5 l-3-1.5z" fill="#2a2a2a"/></g><g transform="translate(3651.5 283.5)"><path d="M6 2 v5 l-4.5 3.5 M6 7 l4.5 3.5" fill="none" stroke="#2a2a2a" stroke-width="1.2"/></g><g transform="translate(3651.5 315.5)"><path d="M6 2 v5 l-4.5 3.5 M6 7 l4.5 3.5" fill="none" stroke="#2a2a2a" stroke-width="1.2"/></g><g transform="translate(3627.5 347.5)"><g fill="none" stroke="#2a2a2a" stroke-width="1.2" stroke-linejoin="round"><path d="M6 1.5 l4.5 2.4 v5.2 l-4.5 2.4 l-4.5-2.4 v-5.2z M1.5 3.9 l4.5 2.4 l4.5-2.4 M6 6.3 v5.2"/></g></g><path d="M3607.9 382.8 v6.4 l3.2-3.2z" fill="#2a2a2a"/><g transform="translate(3627.5 379.5)"><path d="M1 3.5 h7 v6 h-7z M8 5.5 l3-1.5 v5 l-3-1.5" fill="none" stroke="#2a2a2a" stroke-width="1.2"/></g><g transform="translate(3627.5 411.5)"><g fill="none" stroke="#2a2a2a" stroke-width="1.2" stroke-linejoin="round"><path d="M6 1.5 l4.5 2.4 v5.2 l-4.5 2.4 l-4.5-2.4 v-5.2z M1.5 3.9 l4.5 2.4 l4.5-2.4 M6 6.3 v5.2"/></g></g><path d="M3606.3 448.4 h6.4 l-3.2 3.2z" fill="#2a2a2a"/><g transform="translate(3627.5 443.5)"><g fill="none" stroke="#5b36d6" stroke-width="1.2"><path d="M1 3 l3-1.5 l4 3 l-1.5 2 M6.5 6.5 l2 4 M5 11.5 h6 M8 5 l1.5-1"/></g></g><path d="M3630.3 480.4 h6.4 l-3.2 3.2z" fill="#2a2a2a"/><g transform="translate(3651.5 475.5)"><g fill="none" stroke="#2a2a2a" stroke-width="1.2" stroke-linejoin="round"><path d="M6 1.5 l4.5 2.4 v5.2 l-4.5 2.4 l-4.5-2.4 v-5.2z M1.5 3.9 l4.5 2.4 l4.5-2.4 M6 6.3 v5.2"/></g></g><path d="M3654.3 512.4 h6.4 l-3.2 3.2z" fill="#2a2a2a"/><g transform="translate(3675.5 507.5)"><g fill="none" stroke="#2a2a2a" stroke-width="1.2" stroke-linejoin="round"><path d="M6 1.5 l4.5 2.4 v5.2 l-4.5 2.4 l-4.5-2.4 v-5.2z M1.5 3.9 l4.5 2.4 l4.5-2.4 M6 6.3 v5.2"/></g></g><path d="M3678.3 544.4 h6.4 l-3.2 3.2z" fill="#2a2a2a"/><g transform="translate(3699.5 539.5)"><g fill="none" stroke="#2a2a2a" stroke-width="1.2" stroke-linejoin="round"><path d="M6 1.5 l4.5 2.4 v5.2 l-4.5 2.4 l-4.5-2.4 v-5.2z M1.5 3.9 l4.5 2.4 l4.5-2.4 M6 6.3 v5.2"/></g></g><path d="M3702.3 576.4 h6.4 l-3.2 3.2z" fill="#2a2a2a"/><g transform="translate(3723.5 571.5)"><path d="M3 11 v-4 l1.5-5 h3 l1.5 5 v4 M4.5 7 h3" fill="none" stroke="#2a2a2a" stroke-width="1.2"/><path d="M4.5 2 h3 v3 h-3z" fill="#2a2a2a"/></g><g transform="translate(3747.5 603.5)"><path d="M6 2 v5 l-4.5 3.5 M6 7 l4.5 3.5" fill="none" stroke="#2a2a2a" stroke-width="1.2"/></g><g transform="translate(3699.5 635.5)"><path d="M6 2 v5 l-4.5 3.5 M6 7 l4.5 3.5" fill="none" stroke="#2a2a2a" stroke-width="1.2"/></g><g transform="translate(3699.5 667.5)"><circle cx="6" cy="6.5" r="4.8" fill="none" stroke="#2a2a2a" stroke-width="1.2"/><path d="M6 4 v5 M3.5 6.5 h5" stroke="#2a2a2a" stroke-width="1.2"/></g><g transform="translate(3651.5 699.5)"><circle cx="6" cy="6.5" r="4.8" fill="none" stroke="#2a2a2a" stroke-width="1.2"/><path d="M6 4 v5 M3.5 6.5 h5" stroke="#2a2a2a" stroke-width="1.2"/></g><g transform="translate(3651.5 731.5)"><path d="M6 2 v5 l-4.5 3.5 M6 7 l4.5 3.5" fill="none" stroke="#2a2a2a" stroke-width="1.2"/></g><g transform="translate(3627.5 763.5)"><g fill="none" stroke="#2a2a2a" stroke-width="1.2" stroke-linejoin="round"><path d="M6 1.5 l4.5 2.4 v5.2 l-4.5 2.4 l-4.5-2.4 v-5.2z M1.5 3.9 l4.5 2.4 l4.5-2.4 M6 6.3 v5.2"/></g></g><g transform="translate(3627.5 795.5)"><g fill="none" stroke="#2a2a2a" stroke-width="1.2" stroke-linejoin="round"><path d="M6 1.5 l4.5 2.4 v5.2 l-4.5 2.4 l-4.5-2.4 v-5.2z M1.5 3.9 l4.5 2.4 l4.5-2.4 M6 6.3 v5.2"/></g></g><g transform="translate(3627.5 827.5)"><path d="M6 2 v5 l-4.5 3.5 M6 7 l4.5 3.5" fill="none" stroke="#2a2a2a" stroke-width="1.2"/></g><g transform="translate(3627.5 859.5)"><path d="M6 2 v5 l-4.5 3.5 M6 7 l4.5 3.5" fill="none" stroke="#2a2a2a" stroke-width="1.2"/></g><g transform="translate(3563 443)"><path d="M3 7 a4.5 4.5 0 0 1 7.5-3.5 M11 6 a4.5 4.5 0 0 1 -7.5 3.5" fill="none" stroke="#5b36d6" stroke-width="1.3"/><path d="M10.5 1.5 v2.5 h-2.5 M3.5 11.5 v-2.5 h2.5" fill="none" stroke="#5b36d6" stroke-width="1.2"/></g></svg></body></html>
